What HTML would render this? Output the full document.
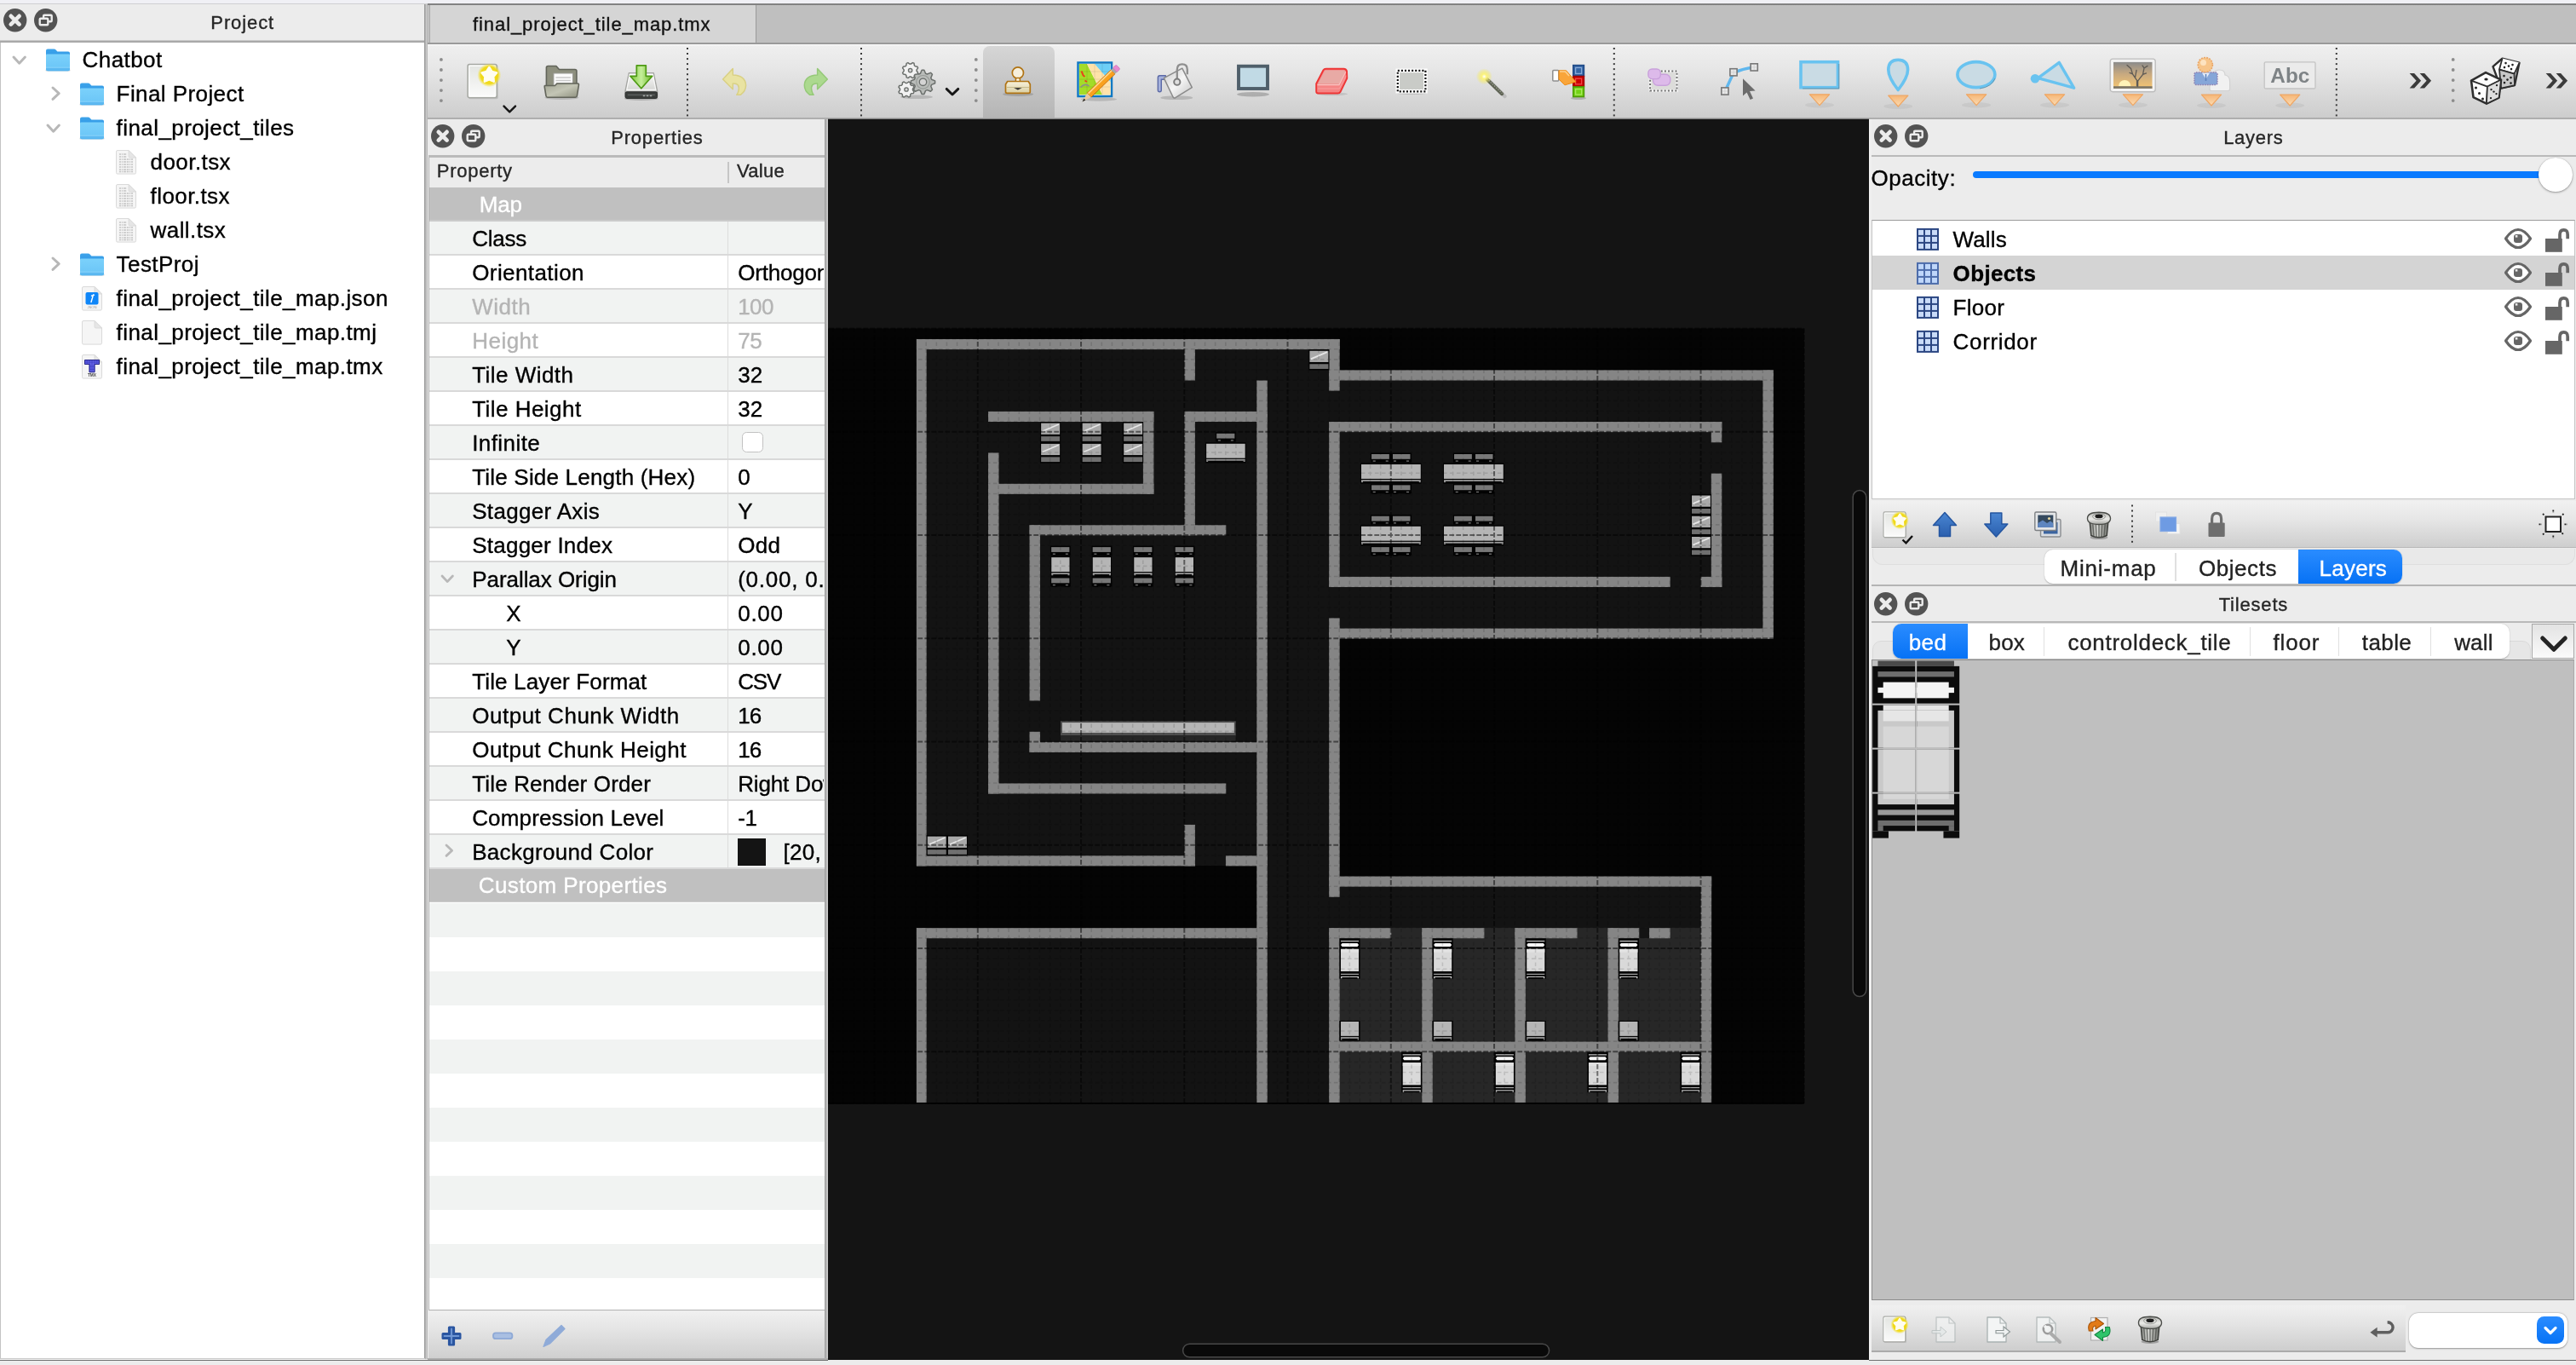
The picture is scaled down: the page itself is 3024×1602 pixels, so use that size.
<!DOCTYPE html>
<html lang="en"><head><meta charset="utf-8"><title>Tiled</title>
<style>
html,body{margin:0;padding:0;}
body{-webkit-font-smoothing:antialiased;width:3024px;height:1602px;overflow:hidden;background:#ececec;position:relative;font-family:"Liberation Sans",sans-serif;}
#root{position:absolute;left:0;top:0;width:3024px;height:1602px;will-change:transform;}
.abs{position:absolute;}
.t{white-space:nowrap;-webkit-text-stroke:0.35px currentColor;}
svg{display:block;overflow:visible;}
</style></head>
<body>
<div id="root">
<!-- left -->
<div class="abs" style="left:0.0px;top:0.0px;width:3024.0px;height:4.0px;background:#f0f0f5;"></div>
<div class="abs" style="left:0.0px;top:3.8px;width:502.0px;height:1.2px;background:#cfcfd2;"></div>
<div class="abs" style="left:0.0px;top:5.0px;width:499.0px;height:42.0px;background:#ececec;"></div>
<svg class="abs" style="left:4.1px;top:10.3px" width="27.4" height="27.4" viewBox="-13.7 -13.7 27.4 27.4"><circle r="13.7" fill="#535353"/><path d="M-4.9 -4.9L4.9 4.9M4.9 -4.9L-4.9 4.9" stroke="#ececec" stroke-width="4.7" stroke-linecap="round"/></svg>
<svg class="abs" style="left:40.3px;top:10.3px" width="27.4" height="27.4" viewBox="-13.7 -13.7 27.4 27.4"><circle r="13.7" fill="#535353"/><rect x="-2.6" y="-6" width="9.6" height="7.6" rx="1" fill="none" stroke="#ececec" stroke-width="2.4"/><rect x="-7" y="-2" width="9.6" height="7.6" rx="1" fill="#535353" stroke="#ececec" stroke-width="2.4"/></svg>
<div class="abs t" style="left:-315.3px;width:1200px;text-align:center;top:15.8px;font-size:22px;line-height:22px;color:#262626;letter-spacing:0.9px;">Project</div>
<div class="abs" style="left:0.0px;top:46.5px;width:499.0px;height:1.5px;background:#c9c9c9;"></div>
<div class="abs" style="left:0.0px;top:48.0px;width:499.0px;height:1.5px;background:#a9a9a9;"></div>
<div class="abs" style="left:0.0px;top:49.5px;width:498.2px;height:1545.0px;background:#ffffff;border-left:1.5px solid #c3c3c3;box-sizing:border-box;"></div>
<svg class="abs" style="left:14.3px;top:65.2px" width="17.4" height="11.2" viewBox="-8.7 -5.6 17.4 11.2"><path d="M-6.7 -3.6L0 3.6L6.7 -3.6" fill="none" stroke="#b8b8b8" stroke-width="3.0" stroke-linecap="round" stroke-linejoin="round"/></svg>
<svg class="abs" style="left:52.6px;top:55.5px" width="30" height="30" viewBox="0 0 30 30"><defs><linearGradient id="fg" x1="0" y1="0" x2="0" y2="1"><stop offset="0" stop-color="#7bd1fb"/><stop offset="1" stop-color="#69c4f6"/></linearGradient><linearGradient id="fgt" x1="0" y1="0" x2="0" y2="1"><stop offset="0" stop-color="#3ea3ea"/><stop offset="1" stop-color="#1c8be0"/></linearGradient></defs><path d="M1.4 26.6H28.6" stroke="#000" stroke-opacity=".12" stroke-width="2.2" stroke-linecap="round"/><path d="M1 3.5Q1 1.5 3 1.5H10.3Q11.8 1.5 12.8 2.7L14.4 4.5H27Q29 4.5 29 6.5V24Q29 26 27 26H3Q1 26 1 24Z" fill="url(#fgt)"/><path d="M1 8.7Q1 7.4 2.4 7.4H27.6Q29 7.4 29 8.7V25.3Q29 27.3 27 27.3H3Q1 27.3 1 25.3Z" fill="url(#fg)"/><path d="M1 23.4H29V25.3Q29 27.3 27 27.3H3Q1 27.3 1 25.3Z" fill="#56b5f0"/><path d="M1 23.2H29" stroke="#8fd6fb" stroke-width=".9"/><path d="M1 25H29" stroke="#6cc2f4" stroke-width=".7"/></svg>
<div class="abs t" style="left:96.6px;top:57.1px;font-size:26px;line-height:26px;color:#000;letter-spacing:0.42px;">Chatbot</div>
<svg class="abs" style="left:59.5px;top:100.6px" width="11.2" height="17.4" viewBox="-5.6 -8.7 11.2 17.4"><path d="M-3.6 -6.7L3.6 0L-3.6 6.7" fill="none" stroke="#b8b8b8" stroke-width="3.0" stroke-linecap="round" stroke-linejoin="round"/></svg>
<svg class="abs" style="left:92.6px;top:95.5px" width="30" height="30" viewBox="0 0 30 30"><defs><linearGradient id="fg" x1="0" y1="0" x2="0" y2="1"><stop offset="0" stop-color="#7bd1fb"/><stop offset="1" stop-color="#69c4f6"/></linearGradient><linearGradient id="fgt" x1="0" y1="0" x2="0" y2="1"><stop offset="0" stop-color="#3ea3ea"/><stop offset="1" stop-color="#1c8be0"/></linearGradient></defs><path d="M1.4 26.6H28.6" stroke="#000" stroke-opacity=".12" stroke-width="2.2" stroke-linecap="round"/><path d="M1 3.5Q1 1.5 3 1.5H10.3Q11.8 1.5 12.8 2.7L14.4 4.5H27Q29 4.5 29 6.5V24Q29 26 27 26H3Q1 26 1 24Z" fill="url(#fgt)"/><path d="M1 8.7Q1 7.4 2.4 7.4H27.6Q29 7.4 29 8.7V25.3Q29 27.3 27 27.3H3Q1 27.3 1 25.3Z" fill="url(#fg)"/><path d="M1 23.4H29V25.3Q29 27.3 27 27.3H3Q1 27.3 1 25.3Z" fill="#56b5f0"/><path d="M1 23.2H29" stroke="#8fd6fb" stroke-width=".9"/><path d="M1 25H29" stroke="#6cc2f4" stroke-width=".7"/></svg>
<div class="abs t" style="left:136.6px;top:97.1px;font-size:26px;line-height:26px;color:#000;letter-spacing:0.42px;">Final Project</div>
<svg class="abs" style="left:54.3px;top:145.2px" width="17.4" height="11.2" viewBox="-8.7 -5.6 17.4 11.2"><path d="M-6.7 -3.6L0 3.6L6.7 -3.6" fill="none" stroke="#b8b8b8" stroke-width="3.0" stroke-linecap="round" stroke-linejoin="round"/></svg>
<svg class="abs" style="left:92.6px;top:135.5px" width="30" height="30" viewBox="0 0 30 30"><defs><linearGradient id="fg" x1="0" y1="0" x2="0" y2="1"><stop offset="0" stop-color="#7bd1fb"/><stop offset="1" stop-color="#69c4f6"/></linearGradient><linearGradient id="fgt" x1="0" y1="0" x2="0" y2="1"><stop offset="0" stop-color="#3ea3ea"/><stop offset="1" stop-color="#1c8be0"/></linearGradient></defs><path d="M1.4 26.6H28.6" stroke="#000" stroke-opacity=".12" stroke-width="2.2" stroke-linecap="round"/><path d="M1 3.5Q1 1.5 3 1.5H10.3Q11.8 1.5 12.8 2.7L14.4 4.5H27Q29 4.5 29 6.5V24Q29 26 27 26H3Q1 26 1 24Z" fill="url(#fgt)"/><path d="M1 8.7Q1 7.4 2.4 7.4H27.6Q29 7.4 29 8.7V25.3Q29 27.3 27 27.3H3Q1 27.3 1 25.3Z" fill="url(#fg)"/><path d="M1 23.4H29V25.3Q29 27.3 27 27.3H3Q1 27.3 1 25.3Z" fill="#56b5f0"/><path d="M1 23.2H29" stroke="#8fd6fb" stroke-width=".9"/><path d="M1 25H29" stroke="#6cc2f4" stroke-width=".7"/></svg>
<div class="abs t" style="left:136.6px;top:137.1px;font-size:26px;line-height:26px;color:#000;letter-spacing:0.42px;">final_project_tiles</div>
<svg class="abs" style="left:135.1px;top:175.0px" width="26" height="31" viewBox="0 0 26 31"><path d="M1.5 3Q1.5 1.5 3 1.5H16L24.5 10V27.6Q24.5 29.1 23 29.1H3Q1.5 29.1 1.5 27.6Z" fill="#f5f5f5" stroke="#dadada" stroke-width="1"/><path d="M16 1.5V8.5Q16 10 17.5 10H24.5Z" fill="#e6e6e6" stroke="#d6d6d6" stroke-width=".8"/><path d="M5 6H14" stroke="#c4c4c4" stroke-width="1.4" stroke-dasharray="2.2 0.8 1.2 0.8 3 0.8"/><path d="M5 9H14" stroke="#c4c4c4" stroke-width="1.4" stroke-dasharray="2.2 0.8 1.2 0.8 3 0.8"/><path d="M5 12H21" stroke="#c4c4c4" stroke-width="1.4" stroke-dasharray="2.2 0.8 1.2 0.8 3 0.8"/><path d="M5 15H21" stroke="#c4c4c4" stroke-width="1.4" stroke-dasharray="2.2 0.8 1.2 0.8 3 0.8"/><path d="M5 18H21" stroke="#c4c4c4" stroke-width="1.4" stroke-dasharray="2.2 0.8 1.2 0.8 3 0.8"/><path d="M5 21H21" stroke="#c4c4c4" stroke-width="1.4" stroke-dasharray="2.2 0.8 1.2 0.8 3 0.8"/><path d="M5 24H21" stroke="#c4c4c4" stroke-width="1.4" stroke-dasharray="2.2 0.8 1.2 0.8 3 0.8"/><path d="M5 26.5H21" stroke="#c4c4c4" stroke-width="1.4" stroke-dasharray="2.2 0.8 1.2 0.8 3 0.8"/></svg>
<div class="abs t" style="left:176.6px;top:177.1px;font-size:26px;line-height:26px;color:#000;letter-spacing:0.42px;">door.tsx</div>
<svg class="abs" style="left:135.1px;top:215.0px" width="26" height="31" viewBox="0 0 26 31"><path d="M1.5 3Q1.5 1.5 3 1.5H16L24.5 10V27.6Q24.5 29.1 23 29.1H3Q1.5 29.1 1.5 27.6Z" fill="#f5f5f5" stroke="#dadada" stroke-width="1"/><path d="M16 1.5V8.5Q16 10 17.5 10H24.5Z" fill="#e6e6e6" stroke="#d6d6d6" stroke-width=".8"/><path d="M5 6H14" stroke="#c4c4c4" stroke-width="1.4" stroke-dasharray="2.2 0.8 1.2 0.8 3 0.8"/><path d="M5 9H14" stroke="#c4c4c4" stroke-width="1.4" stroke-dasharray="2.2 0.8 1.2 0.8 3 0.8"/><path d="M5 12H21" stroke="#c4c4c4" stroke-width="1.4" stroke-dasharray="2.2 0.8 1.2 0.8 3 0.8"/><path d="M5 15H21" stroke="#c4c4c4" stroke-width="1.4" stroke-dasharray="2.2 0.8 1.2 0.8 3 0.8"/><path d="M5 18H21" stroke="#c4c4c4" stroke-width="1.4" stroke-dasharray="2.2 0.8 1.2 0.8 3 0.8"/><path d="M5 21H21" stroke="#c4c4c4" stroke-width="1.4" stroke-dasharray="2.2 0.8 1.2 0.8 3 0.8"/><path d="M5 24H21" stroke="#c4c4c4" stroke-width="1.4" stroke-dasharray="2.2 0.8 1.2 0.8 3 0.8"/><path d="M5 26.5H21" stroke="#c4c4c4" stroke-width="1.4" stroke-dasharray="2.2 0.8 1.2 0.8 3 0.8"/></svg>
<div class="abs t" style="left:176.6px;top:217.1px;font-size:26px;line-height:26px;color:#000;letter-spacing:0.42px;">floor.tsx</div>
<svg class="abs" style="left:135.1px;top:255.0px" width="26" height="31" viewBox="0 0 26 31"><path d="M1.5 3Q1.5 1.5 3 1.5H16L24.5 10V27.6Q24.5 29.1 23 29.1H3Q1.5 29.1 1.5 27.6Z" fill="#f5f5f5" stroke="#dadada" stroke-width="1"/><path d="M16 1.5V8.5Q16 10 17.5 10H24.5Z" fill="#e6e6e6" stroke="#d6d6d6" stroke-width=".8"/><path d="M5 6H14" stroke="#c4c4c4" stroke-width="1.4" stroke-dasharray="2.2 0.8 1.2 0.8 3 0.8"/><path d="M5 9H14" stroke="#c4c4c4" stroke-width="1.4" stroke-dasharray="2.2 0.8 1.2 0.8 3 0.8"/><path d="M5 12H21" stroke="#c4c4c4" stroke-width="1.4" stroke-dasharray="2.2 0.8 1.2 0.8 3 0.8"/><path d="M5 15H21" stroke="#c4c4c4" stroke-width="1.4" stroke-dasharray="2.2 0.8 1.2 0.8 3 0.8"/><path d="M5 18H21" stroke="#c4c4c4" stroke-width="1.4" stroke-dasharray="2.2 0.8 1.2 0.8 3 0.8"/><path d="M5 21H21" stroke="#c4c4c4" stroke-width="1.4" stroke-dasharray="2.2 0.8 1.2 0.8 3 0.8"/><path d="M5 24H21" stroke="#c4c4c4" stroke-width="1.4" stroke-dasharray="2.2 0.8 1.2 0.8 3 0.8"/><path d="M5 26.5H21" stroke="#c4c4c4" stroke-width="1.4" stroke-dasharray="2.2 0.8 1.2 0.8 3 0.8"/></svg>
<div class="abs t" style="left:176.6px;top:257.1px;font-size:26px;line-height:26px;color:#000;letter-spacing:0.42px;">wall.tsx</div>
<svg class="abs" style="left:59.5px;top:300.6px" width="11.2" height="17.4" viewBox="-5.6 -8.7 11.2 17.4"><path d="M-3.6 -6.7L3.6 0L-3.6 6.7" fill="none" stroke="#b8b8b8" stroke-width="3.0" stroke-linecap="round" stroke-linejoin="round"/></svg>
<svg class="abs" style="left:92.6px;top:295.5px" width="30" height="30" viewBox="0 0 30 30"><defs><linearGradient id="fg" x1="0" y1="0" x2="0" y2="1"><stop offset="0" stop-color="#7bd1fb"/><stop offset="1" stop-color="#69c4f6"/></linearGradient><linearGradient id="fgt" x1="0" y1="0" x2="0" y2="1"><stop offset="0" stop-color="#3ea3ea"/><stop offset="1" stop-color="#1c8be0"/></linearGradient></defs><path d="M1.4 26.6H28.6" stroke="#000" stroke-opacity=".12" stroke-width="2.2" stroke-linecap="round"/><path d="M1 3.5Q1 1.5 3 1.5H10.3Q11.8 1.5 12.8 2.7L14.4 4.5H27Q29 4.5 29 6.5V24Q29 26 27 26H3Q1 26 1 24Z" fill="url(#fgt)"/><path d="M1 8.7Q1 7.4 2.4 7.4H27.6Q29 7.4 29 8.7V25.3Q29 27.3 27 27.3H3Q1 27.3 1 25.3Z" fill="url(#fg)"/><path d="M1 23.4H29V25.3Q29 27.3 27 27.3H3Q1 27.3 1 25.3Z" fill="#56b5f0"/><path d="M1 23.2H29" stroke="#8fd6fb" stroke-width=".9"/><path d="M1 25H29" stroke="#6cc2f4" stroke-width=".7"/></svg>
<div class="abs t" style="left:136.6px;top:297.1px;font-size:26px;line-height:26px;color:#000;letter-spacing:0.42px;">TestProj</div>
<svg class="abs" style="left:95.1px;top:335.0px" width="26" height="31" viewBox="0 0 26 31"><path d="M1.5 3Q1.5 1.5 3 1.5H16L24.5 10V27.6Q24.5 29.1 23 29.1H3Q1.5 29.1 1.5 27.6Z" fill="#f5f5f5" stroke="#dadada" stroke-width="1"/><path d="M16 1.5V8.5Q16 10 17.5 10H24.5Z" fill="#e6e6e6" stroke="#d6d6d6" stroke-width=".8"/><rect x="5.5" y="8" width="15" height="14.5" rx="2" fill="#0f86f8"/><path d="M14.5 11L12 19.5M12.5 12.2L15.5 11.2" stroke="#fff" stroke-width="1.4" fill="none" stroke-linecap="round"/><text x="13" y="27.2" font-size="4.2" text-anchor="middle" fill="#9a9a9a" font-family="Liberation Sans, sans-serif">JSON</text></svg>
<div class="abs t" style="left:136.6px;top:337.1px;font-size:26px;line-height:26px;color:#000;letter-spacing:0.42px;">final_project_tile_map.json</div>
<svg class="abs" style="left:95.1px;top:375.0px" width="26" height="31" viewBox="0 0 26 31"><path d="M1.5 3Q1.5 1.5 3 1.5H16L24.5 10V27.6Q24.5 29.1 23 29.1H3Q1.5 29.1 1.5 27.6Z" fill="#f5f5f5" stroke="#dadada" stroke-width="1"/><path d="M16 1.5V8.5Q16 10 17.5 10H24.5Z" fill="#e6e6e6" stroke="#d6d6d6" stroke-width=".8"/></svg>
<div class="abs t" style="left:136.6px;top:377.1px;font-size:26px;line-height:26px;color:#000;letter-spacing:0.42px;">final_project_tile_map.tmj</div>
<svg class="abs" style="left:95.1px;top:415.0px" width="26" height="31" viewBox="0 0 26 31"><path d="M1.5 3Q1.5 1.5 3 1.5H16L24.5 10V27.6Q24.5 29.1 23 29.1H3Q1.5 29.1 1.5 27.6Z" fill="#f5f5f5" stroke="#dadada" stroke-width="1"/><path d="M16 1.5V8.5Q16 10 17.5 10H24.5Z" fill="#e6e6e6" stroke="#d6d6d6" stroke-width=".8"/><path d="M4.5 7.5H21.5V12.5H16V21.8H10V12.5H4.5Z" fill="#6262e6" stroke="#15157a" stroke-width=".9"/><path d="M4.5 10H21.5M10 7.5V21.8M16 7.5V21.8M13 7.5V21.8M10 15H16M10 18.4H16M7.2 7.5V12.5M18.8 7.5V12.5" stroke="#3838b8" stroke-width=".6" fill="none"/><text x="13" y="27.4" font-size="4.8" text-anchor="middle" fill="#444" font-family="Liberation Sans, sans-serif" font-weight="bold">TMX</text></svg>
<div class="abs t" style="left:136.6px;top:417.1px;font-size:26px;line-height:26px;color:#000;letter-spacing:0.42px;">final_project_tile_map.tmx</div>
<div class="abs" style="left:498.2px;top:5.0px;width:3.9px;height:1590.0px;background:linear-gradient(90deg,#8f8f8f,#b4b4b4 40%,#d0d0d0 70%,#a8a8a8);"></div>
<!-- topbar -->
<div class="abs" style="left:502.0px;top:3.8px;width:2522.0px;height:47.0px;background:#bfbfbf;"></div>
<div class="abs" style="left:503.5px;top:5.6px;width:384.3px;height:44.8px;background:#d5d5d5;border-right:1.8px solid #9a9a9a;border-left:1px solid #ababab;box-sizing:border-box;"></div>
<div class="abs" style="left:502.0px;top:3.8px;width:2522.0px;height:2.0px;background:linear-gradient(#8a8a8a,#7c7c7c);"></div>
<div class="abs" style="left:502.0px;top:50.1px;width:2522.0px;height:1.8px;background:#9a9a9a;"></div>
<div class="abs t" style="left:555.0px;top:17.8px;font-size:22px;line-height:22px;color:#111;letter-spacing:0.92px;">final_project_tile_map.tmx</div>
<div class="abs" style="left:502.0px;top:51.9px;width:2522.0px;height:86.1px;background:linear-gradient(#fbfbfb,#efefef 2.5%,#e6e6e6 35%,#cdcdcd);"></div>
<div class="abs" style="left:502.0px;top:137.6px;width:2522.0px;height:2.2px;background:#aeaeae;"></div>
<div class="abs" style="left:1154.0px;top:54.0px;width:84.0px;height:83.5px;background:linear-gradient(#d6d6d6,#b5b5b5);border-radius:8px 8px 0 0;"></div>
<svg class="abs" style="left:0;top:0" width="3024" height="140" viewBox="0 0 3024 140"><defs><linearGradient id="otri" x1="0" y1="0" x2="0" y2="1"><stop offset="0" stop-color="#f6b676"/><stop offset="1" stop-color="#fbdcb4"/></linearGradient><linearGradient id="pg" x1="0" y1="0" x2="0" y2="1"><stop offset="0" stop-color="#e3e5e1"/><stop offset="1" stop-color="#fbfbfb"/></linearGradient><radialGradient id="glow"><stop offset="0" stop-color="#f1d90f"/><stop offset=".72" stop-color="#f1d90f" stop-opacity=".95"/><stop offset="1" stop-color="#f5e43a" stop-opacity="0"/></radialGradient><radialGradient id="wglow"><stop offset="0" stop-color="#fff"/><stop offset=".3" stop-color="#fbf27c"/><stop offset="1" stop-color="#f5e84a" stop-opacity="0"/></radialGradient><linearGradient id="trb" x1="0" y1="0" x2="1" y2="0"><stop offset="0" stop-color="#7f817c"/><stop offset=".4" stop-color="#dcddd9"/><stop offset="1" stop-color="#6f716c"/></linearGradient><linearGradient id="trr" x1="0" y1="0" x2="0" y2="1"><stop offset="0" stop-color="#b9bab6"/><stop offset=".55" stop-color="#ecece9"/><stop offset="1" stop-color="#a5a6a2"/></linearGradient><linearGradient id="fold" x1="0" y1="0" x2="1" y2="1"><stop offset="0" stop-color="#a3a594"/><stop offset=".5" stop-color="#c3c5b5"/><stop offset="1" stop-color="#8f917f"/></linearGradient><linearGradient id="drv" x1="0" y1="0" x2="0" y2="1"><stop offset="0" stop-color="#fbfbfb"/><stop offset="1" stop-color="#cfd0cd"/></linearGradient><linearGradient id="garr" x1="0" y1="0" x2="1" y2="0"><stop offset="0" stop-color="#7cc53a"/><stop offset=".5" stop-color="#c5ef9a"/><stop offset="1" stop-color="#6ab524"/></linearGradient><linearGradient id="sky" x1="0" y1="0" x2="0" y2="1"><stop offset="0" stop-color="#8b8b8b"/><stop offset=".45" stop-color="#c7a980"/><stop offset="1" stop-color="#f6c672"/></linearGradient><linearGradient id="bkt" x1="0" y1="0" x2="1" y2="1"><stop offset="0" stop-color="#c9c9c9"/><stop offset=".5" stop-color="#f6f6f6"/><stop offset="1" stop-color="#c2c2c2"/></linearGradient><linearGradient id="stp" x1="0" y1="0" x2="0" y2="1"><stop offset="0" stop-color="#f7f1da"/><stop offset="1" stop-color="#d9cfa4"/></linearGradient></defs><circle cx="517.9" cy="69.9" r="1.9" fill="#8c8c8c"/><circle cx="517.9" cy="82" r="1.9" fill="#8c8c8c"/><circle cx="517.9" cy="94.1" r="1.9" fill="#8c8c8c"/><circle cx="517.9" cy="106.1" r="1.9" fill="#8c8c8c"/><circle cx="517.9" cy="118.1" r="1.9" fill="#8c8c8c"/><g transform="translate(548.3 74.8) scale(1.0)"><rect x="1.5" y="1.5" width="35" height="40" rx="2" fill="#000" opacity=".12"/><rect x=".8" y=".8" width="34" height="39" rx="2" fill="url(#pg)" stroke="#a6a8a3" stroke-width="1.5"/><rect x="2.4" y="2.4" width="30.8" height="35.8" rx="1" fill="none" stroke="#fff" stroke-width="1.4" opacity=".85"/><circle cx="26" cy="13.4" r="14" fill="url(#glow)"/><path d="M26.0 4.2L29.1 9.2L34.7 10.6L30.9 15.0L31.4 20.8L26.0 18.6L20.6 20.8L21.1 15.0L17.3 10.6L22.9 9.2Z" fill="#fffdf0" stroke="#fffdf0" stroke-width="2.6" stroke-linejoin="round"/></g><path d="M591.5 124.6L598.2 131.4L605 124.6" fill="none" stroke="#151515" stroke-width="2.4" stroke-linecap="round" stroke-linejoin="round"/><g transform="translate(638.4 76)"><ellipse cx="21" cy="38.5" rx="20" ry="2.5" fill="#000" opacity=".15"/><path d="M3 3.5Q3 1.5 5 1.5H14.5L18 5.5H36.5Q38.5 5.5 38.5 7.5V34H3Z" fill="#8d8f7e" stroke="#62645a" stroke-width="1.6" stroke-linejoin="round"/><rect x="11.5" y="10" width="22.5" height="20" fill="#fbfbfb" stroke="#9b9b96" stroke-width="1"/><path d="M14 15H31.5M14 18.5H31.5M14 22H31.5" stroke="#c9c9c9" stroke-width="1.5"/><path d="M1.2 24.5H13L15.5 22H39.8Q41.3 22 41 23.8L39 36.5Q38.7 38.2 37 38.2H4.5Q2.8 38.2 2.6 36.5L.9 26.3Q.7 24.5 1.2 24.5Z" fill="url(#fold)" stroke="#62645a" stroke-width="1.6" stroke-linejoin="round"/></g><g transform="translate(732.8 75.8)"><ellipse cx="20" cy="40" rx="20" ry="2.2" fill="#000" opacity=".18"/><path d="M5.5 10H34.5L38.8 31V33H1.2V31Z" fill="url(#drv)" stroke="#a4a5a2" stroke-width="1.4" stroke-linejoin="round"/><path d="M6.5 11.5H33.5L37 29.5H3Z" fill="none" stroke="#fff" stroke-width="1.2" opacity=".8"/><rect x="1.2" y="32" width="37.6" height="7.6" rx="1.8" fill="#3b3e3c" stroke="#2a2c2b" stroke-width="1"/><path d="M4 35.6H36" stroke="#5e6260" stroke-width="1.2"/><path d="M22 36.6H34" stroke="#9da19f" stroke-width="1.6" stroke-dasharray="2.5 1.5"/><path d="M14.5 1H25.5V13.5H33L20 28L7 13.5H14.5Z" fill="url(#garr)" stroke="#4e9a14" stroke-width="1.7" stroke-linejoin="round"/></g><rect x="806" y="56.0" width="2" height="2" fill="#3a3a3a"/><rect x="806" y="62.0" width="2" height="2" fill="#3a3a3a"/><rect x="806" y="68.1" width="2" height="2" fill="#3a3a3a"/><rect x="806" y="74.1" width="2" height="2" fill="#3a3a3a"/><rect x="806" y="80.1" width="2" height="2" fill="#3a3a3a"/><rect x="806" y="86.2" width="2" height="2" fill="#3a3a3a"/><rect x="806" y="92.2" width="2" height="2" fill="#3a3a3a"/><rect x="806" y="98.2" width="2" height="2" fill="#3a3a3a"/><rect x="806" y="104.2" width="2" height="2" fill="#3a3a3a"/><rect x="806" y="110.3" width="2" height="2" fill="#3a3a3a"/><rect x="806" y="116.3" width="2" height="2" fill="#3a3a3a"/><rect x="806" y="122.3" width="2" height="2" fill="#3a3a3a"/><rect x="806" y="128.4" width="2" height="2" fill="#3a3a3a"/><rect x="806" y="134.4" width="2" height="2" fill="#3a3a3a"/><g transform="translate(847.8 79.8)"><path d="M12.5 0.8L0.8 13.2L12.5 25V18.2Q21 17.5 19.2 26.5Q18.4 30 17 31.5H21.5Q27.8 27 27.8 20.2Q27.2 8.8 12.5 8.2Z" fill="#e9e3a2" stroke="#d9d084" stroke-width="1.5" stroke-linejoin="round"/></g><g transform="translate(972.1 79.8) scale(-1 1)"><path d="M12.5 0.8L0.8 13.2L12.5 25V18.2Q21 17.5 19.2 26.5Q18.4 30 17 31.5H21.5Q27.8 27 27.8 20.2Q27.2 8.8 12.5 8.2Z" fill="#acd98f" stroke="#95c978" stroke-width="1.5" stroke-linejoin="round"/></g><rect x="1010" y="56.0" width="2" height="2" fill="#3a3a3a"/><rect x="1010" y="62.0" width="2" height="2" fill="#3a3a3a"/><rect x="1010" y="68.1" width="2" height="2" fill="#3a3a3a"/><rect x="1010" y="74.1" width="2" height="2" fill="#3a3a3a"/><rect x="1010" y="80.1" width="2" height="2" fill="#3a3a3a"/><rect x="1010" y="86.2" width="2" height="2" fill="#3a3a3a"/><rect x="1010" y="92.2" width="2" height="2" fill="#3a3a3a"/><rect x="1010" y="98.2" width="2" height="2" fill="#3a3a3a"/><rect x="1010" y="104.2" width="2" height="2" fill="#3a3a3a"/><rect x="1010" y="110.3" width="2" height="2" fill="#3a3a3a"/><rect x="1010" y="116.3" width="2" height="2" fill="#3a3a3a"/><rect x="1010" y="122.3" width="2" height="2" fill="#3a3a3a"/><rect x="1010" y="128.4" width="2" height="2" fill="#3a3a3a"/><rect x="1010" y="134.4" width="2" height="2" fill="#3a3a3a"/><ellipse cx="1076" cy="113.8" rx="19" ry="2.3" fill="#000" opacity=".15"/><path d="M1097.63 94.91 L1097.63 97.69 L1093.56 99.35 L1092.77 101.25 L1094.48 105.31 L1092.51 107.28 L1088.45 105.57 L1086.55 106.36 L1084.89 110.43 L1082.11 110.43 L1080.45 106.36 L1078.55 105.57 L1074.49 107.28 L1072.52 105.31 L1074.23 101.25 L1073.44 99.35 L1069.37 97.69 L1069.37 94.91 L1073.44 93.25 L1074.23 91.35 L1072.52 87.29 L1074.49 85.32 L1078.55 87.03 L1080.45 86.24 L1082.11 82.17 L1084.89 82.17 L1086.55 86.24 L1088.45 87.03 L1092.51 85.32 L1094.48 87.29 L1092.77 91.35 L1093.56 93.25Z" fill="#b9bcb9" stroke="#6b6f6c" stroke-width="1.5" stroke-linejoin="round"/><circle cx="1083.5" cy="96.3" r="4.2" fill="#d4d4d4" stroke="#6b6f6c" stroke-width="1.3"/><circle cx="1083.5" cy="96.3" r="7.8" fill="none" stroke="#989c99" stroke-width="1.2"/><path d="M1077.60 85.30 L1076.90 87.01 L1074.43 87.35 L1073.39 88.40 L1073.05 90.88 L1071.35 91.59 L1069.36 90.08 L1067.88 90.09 L1065.90 91.60 L1064.19 90.90 L1063.85 88.43 L1062.80 87.39 L1060.32 87.05 L1059.61 85.35 L1061.12 83.36 L1061.11 81.88 L1059.60 79.90 L1060.30 78.19 L1062.77 77.85 L1063.81 76.80 L1064.15 74.32 L1065.85 73.61 L1067.84 75.12 L1069.32 75.11 L1071.30 73.60 L1073.01 74.30 L1073.35 76.77 L1074.40 77.81 L1076.88 78.15 L1077.59 79.85 L1076.08 81.84 L1076.09 83.32Z" fill="#f2f2f2" stroke="#6b6f6c" stroke-width="1.5" stroke-linejoin="round"/><circle cx="1068.6" cy="82.6" r="2.2" fill="#d4d4d4" stroke="#6b6f6c" stroke-width="1.3"/><path d="M1073.00 107.70 L1072.30 109.41 L1069.83 109.75 L1068.79 110.80 L1068.45 113.28 L1066.75 113.99 L1064.76 112.48 L1063.28 112.49 L1061.30 114.00 L1059.59 113.30 L1059.25 110.83 L1058.20 109.79 L1055.72 109.45 L1055.01 107.75 L1056.52 105.76 L1056.51 104.28 L1055.00 102.30 L1055.70 100.59 L1058.17 100.25 L1059.21 99.20 L1059.55 96.72 L1061.25 96.01 L1063.24 97.52 L1064.72 97.51 L1066.70 96.00 L1068.41 96.70 L1068.75 99.17 L1069.80 100.21 L1072.28 100.55 L1072.99 102.25 L1071.48 104.24 L1071.49 105.72Z" fill="#f2f2f2" stroke="#6b6f6c" stroke-width="1.5" stroke-linejoin="round"/><circle cx="1064" cy="105" r="2.2" fill="#d4d4d4" stroke="#6b6f6c" stroke-width="1.3"/><path d="M1111.2 104.4L1118 111L1124.8 104.4" fill="none" stroke="#151515" stroke-width="2.9" stroke-linecap="round" stroke-linejoin="round"/><circle cx="1145.8" cy="69.9" r="1.9" fill="#8c8c8c"/><circle cx="1145.8" cy="82" r="1.9" fill="#8c8c8c"/><circle cx="1145.8" cy="94.1" r="1.9" fill="#8c8c8c"/><circle cx="1145.8" cy="106.1" r="1.9" fill="#8c8c8c"/><circle cx="1145.8" cy="118.1" r="1.9" fill="#8c8c8c"/><g transform="translate(1179.7 78)"><ellipse cx="15.5" cy="32.5" rx="18" ry="2.6" fill="#000" opacity=".15"/><circle cx="15.2" cy="7.5" r="6.6" fill="#f6efdc" stroke="#b07313" stroke-width="1.7"/><rect x="12.7" y="13.5" width="5" height="6" rx="1.5" fill="#fbf6e6" stroke="#b07313" stroke-width="1.5"/><path d="M3 17.5H27.5L29.6 21V29.5Q29.6 31.3 27.8 31.3H2.6Q.8 31.3 .8 29.5V21Z" fill="url(#stp)" stroke="#b07313" stroke-width="1.7" stroke-linejoin="round"/><path d="M2 24.5H28.5" stroke="#c8bc8e" stroke-width="1"/><path d="M10.5 25.2H20L15.2 27.6Z" fill="#222"/></g><g transform="translate(1264 72)"><ellipse cx="26" cy="44.5" rx="21" ry="2.2" fill="#000" opacity=".14"/><rect x="1.5" y="1.5" width="39.5" height="39.5" fill="#fff7df" stroke="#1179c4" stroke-width="2.5"/><path d="M3 3H12L30 39H3Z" fill="#a4dc28"/><path d="M12 3H21L39.5 24V39H30Z" fill="#ffe2aa"/><path d="M21 3H39.5V24Z" fill="#6dcff6"/><path d="M3 12H39.5M3 21H39.5M3 30H39.5M12 3V39M21 3V39M30 3V39" stroke="#000" stroke-opacity=".09" stroke-width="1"/><path d="M5.5 11.5l2 4.5M7 16l2.5 2M9.5 22.5l2.5 1.5" stroke="#e8441a" stroke-width="2" fill="none"/><path d="M4.5 30.5Q9 25 14.5 29" stroke="#8c8c8c" stroke-width="1.6" fill="none"/></g><g><path d="M1276.1 109.3L1304.2 81.9L1309 86.7L1280.9 114.1Z" fill="#f9a11e" stroke="#c76b00" stroke-width=".9"/><path d="M1277.6 109.6L1305.2 82.7" stroke="#ffd58a" stroke-width="1.8"/><path d="M1304.2 81.9L1306.5 79.7L1311.3 84.5L1309 86.7Z" fill="#a9a9a9"/><path d="M1306.5 79.7L1309.2 77Q1310.2 76.2 1311.2 77L1314 79.8Q1314.9 80.8 1314 81.8L1311.3 84.5Z" fill="#e88ad0" stroke="#c96bb4" stroke-width=".7"/><path d="M1270.6 119.4L1276.1 109.3L1280.9 114.1Z" fill="#e9c9a0"/><path d="M1270.4 119.6L1272.6 115.7L1274.4 117.5Z" fill="#222"/></g><g transform="translate(1358.3 74.2)"><ellipse cx="23" cy="40.5" rx="19" ry="2.4" fill="#000" opacity=".15"/><path d="M10 14.5H3.2Q1 14.5 1 16.8V31.5Q1 33.5 3 33.5T5 31.5V19H10Z" fill="#a5b1dc" stroke="#5c6aa6" stroke-width="1.4" stroke-linejoin="round"/><path d="M8 17.5L29.5 6L41 28.5L21.5 40.5Q19.8 41.3 18.8 39.8Z" fill="url(#bkt)" stroke="#8a8a8a" stroke-width="1.5" stroke-linejoin="round"/><path d="M23.5 21V7.5Q23.5 1.2 29.5 1.2T35.5 7.5V13" fill="none" stroke="#8e8e8e" stroke-width="2.3"/><circle cx="23.5" cy="22" r="3.6" fill="#e0e0e0" stroke="#7c7c7c" stroke-width="2"/></g><ellipse cx="1471" cy="110.8" rx="19" ry="2.8" fill="#000" opacity=".2"/><rect x="1454" y="77.7" width="34" height="26.3" fill="#c1dae5" stroke="#4f5f6a" stroke-width="3.9"/><g transform="translate(1544 79.8)"><ellipse cx="20" cy="30.5" rx="18" ry="2" fill="#000" opacity=".1"/><path d="M1.2 18.5L9.5 2.5Q10.5 1 12.5 1H33.5Q36 1 37 3.5L37.3 12L29.5 28Q28.5 29.7 26.5 29.7H3.5Q1.2 29.7 1.2 27.4Z" fill="#f58585" stroke="#ee3535" stroke-width="1.9" stroke-linejoin="round"/><path d="M3 18.8L10.8 3.6Q11.4 2.8 12.6 2.8H33.4Q34.8 2.8 35.3 4.2L28 18.8Z" fill="#e8aaa5"/><path d="M2.5 19.8H28L35.8 4.5" fill="none" stroke="#f9c2c0" stroke-width="1.2"/><path d="M3 24.2H28.3L36.2 9" fill="none" stroke="#f9a0a0" stroke-width="1"/></g><ellipse cx="1657" cy="109.3" rx="18" ry="1.8" fill="#000" opacity=".12"/><rect x="1640.8" y="82.8" width="32.6" height="24.5" fill="#c9cbc7" stroke="#fff" stroke-width="4.6"/><rect x="1640.8" y="82.8" width="32.6" height="24.5" fill="none" stroke="#111" stroke-width="2.2" stroke-dasharray="2.05 2.03"/><path d="M1749 95.5L1766.5 113" stroke="#000" stroke-opacity=".12" stroke-width="4.5" stroke-linecap="round"/><path d="M1745.5 93L1763.2 110.2" stroke="#5e6354" stroke-width="4" stroke-linecap="round"/><path d="M1745.5 92.2L1763.4 109.6" stroke="#9ea294" stroke-width="1.3" stroke-dasharray="1.5 1.5"/><circle cx="1742.3" cy="89.8" r="9.5" fill="url(#wglow)"/><g><ellipse cx="1853" cy="115.3" rx="9" ry="1.8" fill="#000" opacity=".18"/><rect x="1822.8" y="82.6" width="7" height="12.4" rx="1" fill="#fff" stroke="#8e8e8e" stroke-width="1.5"/><rect x="1846.8" y="76.6" width="12.6" height="12.6" fill="#3465a4" stroke="#204a87" stroke-width="1.6"/><rect x="1849.6" y="79.4" width="7" height="7" fill="none" stroke="#87a9d8" stroke-width="1.3"/><rect x="1846.8" y="89.6" width="12.6" height="12" fill="#cc0000" stroke="#a40000" stroke-width="1.6"/><rect x="1849.6" y="92.2" width="7" height="6.6" fill="none" stroke="#ef4949" stroke-width="1.3"/><rect x="1846.8" y="101.9" width="12.6" height="11.6" fill="#73d216" stroke="#4e9a06" stroke-width="1.6"/><rect x="1849.6" y="104.6" width="7" height="6.4" fill="none" stroke="#a9ea5e" stroke-width="1.3"/><path d="M1830 82.8H1838.5L1850 96L1837 99.8L1830 93Z" fill="#f9a53a" stroke="#f08a10" stroke-width="1" stroke-linejoin="round"/><path d="M1831 84H1837.5L1842 89" stroke="#fdd08e" stroke-width="1.6" fill="none"/></g><rect x="1893.8" y="56.0" width="2" height="2" fill="#3a3a3a"/><rect x="1893.8" y="62.0" width="2" height="2" fill="#3a3a3a"/><rect x="1893.8" y="68.1" width="2" height="2" fill="#3a3a3a"/><rect x="1893.8" y="74.1" width="2" height="2" fill="#3a3a3a"/><rect x="1893.8" y="80.1" width="2" height="2" fill="#3a3a3a"/><rect x="1893.8" y="86.2" width="2" height="2" fill="#3a3a3a"/><rect x="1893.8" y="92.2" width="2" height="2" fill="#3a3a3a"/><rect x="1893.8" y="98.2" width="2" height="2" fill="#3a3a3a"/><rect x="1893.8" y="104.2" width="2" height="2" fill="#3a3a3a"/><rect x="1893.8" y="110.3" width="2" height="2" fill="#3a3a3a"/><rect x="1893.8" y="116.3" width="2" height="2" fill="#3a3a3a"/><rect x="1893.8" y="122.3" width="2" height="2" fill="#3a3a3a"/><rect x="1893.8" y="128.4" width="2" height="2" fill="#3a3a3a"/><rect x="1893.8" y="134.4" width="2" height="2" fill="#3a3a3a"/><g><rect x="1937.1" y="83.6" width="31.4" height="23" fill="#dcdcda" stroke="#f4f4f4" stroke-width="3"/><rect x="1937.1" y="83.6" width="31.4" height="23" fill="none" stroke="#6e6e6e" stroke-width="2" stroke-dasharray="2 2.2"/><rect x="1940.6" y="87.3" width="20.2" height="13" rx="5.5" fill="#ddbaea" stroke="#c9a1db" stroke-width="1.4"/><rect x="1934.9" y="81" width="14.4" height="11.6" rx="4.5" fill="#ddbaea" stroke="#c9a1db" stroke-width="1.4"/></g><path d="M2025.5 106L2035 85.5Q2046 80.5 2059 79" fill="none" stroke="#5fb7ee" stroke-width="3.4"/><rect x="2020.8000000000002" y="102.9" width="8.2" height="8.2" fill="#e9e9e9" stroke="#777" stroke-width="1.6"/><path d="M2024.9 104V110M2021.9 107H2027.9" stroke="#cfcfcf" stroke-width=".8"/><rect x="2030.9" y="80.7" width="8.2" height="8.2" fill="#e9e9e9" stroke="#777" stroke-width="1.6"/><path d="M2035 81.8V87.8M2032 84.8H2038" stroke="#cfcfcf" stroke-width=".8"/><rect x="2055.1" y="74.80000000000001" width="8.2" height="8.2" fill="#e9e9e9" stroke="#777" stroke-width="1.6"/><path d="M2059.2 75.9V81.9M2056.2 78.9H2062.2" stroke="#cfcfcf" stroke-width=".8"/><path d="M2046 92.2V112.6L2050.6 108.4L2054.6 117L2058 115.4L2054 107L2060.6 106.6Z" fill="#6c6c6c"/><rect x="2114" y="72.7" width="43.5" height="30" fill="#c9dbe4" stroke="#69c3f0" stroke-width="3.6"/><path d="M2116.2 103.9H2158.8V75" fill="none" stroke="#555" stroke-opacity=".45" stroke-width="1"/><ellipse cx="2136" cy="123.3" rx="17" ry="3.2" fill="#000" opacity=".05"/><path d="M2124.4 110.8H2147.6L2136 123.6Z" fill="url(#otri)" stroke="#efa663" stroke-width="1.2" stroke-linejoin="round"/><path d="M2228.2 105.5Q2216.8 91 2216.8 82Q2216.8 70.2 2228.2 70.2T2239.6 82Q2239.6 91 2228.2 105.5Z" fill="#c9dbe4" stroke="#69c3f0" stroke-width="3.6" stroke-linejoin="round"/><ellipse cx="2228.3" cy="124.7" rx="17" ry="3.2" fill="#000" opacity=".05"/><path d="M2216.7000000000003 112.2H2239.9L2228.3 125.0Z" fill="url(#otri)" stroke="#efa663" stroke-width="1.2" stroke-linejoin="round"/><ellipse cx="2319.9" cy="87.6" rx="22" ry="15" fill="#c9dbe4" stroke="#69c3f0" stroke-width="3.6"/><path d="M2342 92Q2338 102 2324 104" fill="none" stroke="#555" stroke-opacity=".4" stroke-width="1"/><ellipse cx="2320.1" cy="123.3" rx="17" ry="3.2" fill="#000" opacity=".05"/><path d="M2308.5 110.8H2331.7L2320.1 123.6Z" fill="url(#otri)" stroke="#efa663" stroke-width="1.2" stroke-linejoin="round"/><path d="M2392.4 91.6L2417.3 73.4L2434.6 103.2Z" fill="#c9dbe4" stroke="#69c3f0" stroke-width="3.4" stroke-linejoin="round"/><circle cx="2389" cy="92.2" r="5.3" fill="#69c3f0"/><ellipse cx="2412" cy="123.3" rx="17" ry="3.2" fill="#000" opacity=".05"/><path d="M2400.4 110.8H2423.6L2412 123.6Z" fill="url(#otri)" stroke="#efa663" stroke-width="1.2" stroke-linejoin="round"/><g transform="translate(2476.5 68.4)"><rect x=".7" y=".7" width="53" height="38.6" rx="3" fill="#f3f3f3" stroke="#bdbdbd" stroke-width="1.4"/><rect x="4.5" y="4.5" width="45.5" height="31" fill="url(#sky)"/><path d="M10.5 32.8A7.2 7.2 0 0 1 24.9 32.8Z" fill="#fff3b8"/><rect x="4.5" y="32.8" width="45.5" height="2.7" fill="#7d7769"/><path d="M32.8 33V27L27 18.5L25 12L20.5 8M27 18.5L23.5 17M32.8 27L39 19L40.5 11.5L44.5 9M39 19L43 17.5M40.5 11.5L38.5 8.5M30 22.5L31.5 14" fill="none" stroke="#5f5b55" stroke-width="1.3" stroke-linecap="round"/><path d="M32.6 33V26.5" stroke="#5f5b55" stroke-width="2.4"/></g><ellipse cx="2503.9" cy="123.3" rx="17" ry="3.2" fill="#000" opacity=".05"/><path d="M2492.3 110.8H2515.5L2503.9 123.6Z" fill="url(#otri)" stroke="#efa663" stroke-width="1.2" stroke-linejoin="round"/><g><path d="M2598 90Q2598 82 2605 82T2612 88Q2617.6 89 2617.6 96V104.5Q2617.6 106.5 2615.6 106.5H2596Q2594 106.5 2594 104.5V94Q2594 90 2598 90Z" fill="#f1f1f1" stroke="#d2d2d2" stroke-width="1.2"/><rect x="2576" y="85" width="27" height="14.5" rx="2" fill="#86a6d8" stroke="#8f7fb0" stroke-width="1.4" stroke-dasharray="1.6 1.2"/><path d="M2585 85.5L2589.5 93L2594 85.5" fill="#e7eef9"/><path d="M2589.5 87V95" stroke="#5f83bd" stroke-width="1.6"/><circle cx="2588.8" cy="76.1" r="8.6" fill="#f7c58a" stroke="#e9a667" stroke-width="1.6" stroke-dasharray="2 1.2"/><circle cx="2586.5" cy="73.5" r="3.5" fill="#fde3c0"/></g><ellipse cx="2596" cy="123.7" rx="17" ry="3.2" fill="#000" opacity=".05"/><path d="M2584.4 111.2H2607.6L2596 124.0Z" fill="url(#otri)" stroke="#efa663" stroke-width="1.2" stroke-linejoin="round"/><rect x="2658.2" y="72.8" width="59.8" height="31.2" rx="1.5" fill="#ebebeb" stroke="#c3c3c3" stroke-width="1.3"/><text x="2688.3" y="97.2" font-size="24.5" font-weight="bold" text-anchor="middle" fill="#7e8386" font-family="Liberation Sans, sans-serif" textLength="46" lengthAdjust="spacingAndGlyphs">Abc</text><ellipse cx="2688.2" cy="123.7" rx="17" ry="3.2" fill="#000" opacity=".05"/><path d="M2676.6 111.2H2699.7999999999997L2688.2 124.0Z" fill="url(#otri)" stroke="#efa663" stroke-width="1.2" stroke-linejoin="round"/><rect x="2741.8" y="56.0" width="2" height="2" fill="#3a3a3a"/><rect x="2741.8" y="62.0" width="2" height="2" fill="#3a3a3a"/><rect x="2741.8" y="68.1" width="2" height="2" fill="#3a3a3a"/><rect x="2741.8" y="74.1" width="2" height="2" fill="#3a3a3a"/><rect x="2741.8" y="80.1" width="2" height="2" fill="#3a3a3a"/><rect x="2741.8" y="86.2" width="2" height="2" fill="#3a3a3a"/><rect x="2741.8" y="92.2" width="2" height="2" fill="#3a3a3a"/><rect x="2741.8" y="98.2" width="2" height="2" fill="#3a3a3a"/><rect x="2741.8" y="104.2" width="2" height="2" fill="#3a3a3a"/><rect x="2741.8" y="110.3" width="2" height="2" fill="#3a3a3a"/><rect x="2741.8" y="116.3" width="2" height="2" fill="#3a3a3a"/><rect x="2741.8" y="122.3" width="2" height="2" fill="#3a3a3a"/><rect x="2741.8" y="128.4" width="2" height="2" fill="#3a3a3a"/><rect x="2741.8" y="134.4" width="2" height="2" fill="#3a3a3a"/><path d="M2828.6 86H2834.1L2842.1 94.8L2834.1 103.6H2828.6L2836.6 94.8Z" fill="#3b3b3b"/><path d="M2840.6 86H2846.1L2854.1 94.8L2846.1 103.6H2840.6L2848.6 94.8Z" fill="#3b3b3b"/><circle cx="2879.7" cy="69.9" r="1.9" fill="#8c8c8c"/><circle cx="2879.7" cy="82" r="1.9" fill="#8c8c8c"/><circle cx="2879.7" cy="94.1" r="1.9" fill="#8c8c8c"/><circle cx="2879.7" cy="106.1" r="1.9" fill="#8c8c8c"/><circle cx="2879.7" cy="118.1" r="1.9" fill="#8c8c8c"/><path d="M2988.6 86H2994.1L3002.1 94.8L2994.1 103.6H2988.6L2996.6 94.8Z" fill="#3b3b3b"/><path d="M3000.6 86H3006.1L3014.1 94.8L3006.1 103.6H3000.6L3008.6 94.8Z" fill="#3b3b3b"/><g transform="translate(2899.5 67.1)"><path d="M27 11L38 1.5L58 6.5L52.5 33L36.5 36.5Z" fill="#fbfbfb" stroke="#2e2e2e" stroke-width="2.4" stroke-linejoin="round"/><path d="M38 1.5L34.5 14.5L52 19.5L58 6.5" fill="#fff" stroke="#2e2e2e" stroke-width="1.8" stroke-linejoin="round"/><path d="M34.5 14.5L52 19.5L52.5 33L36.5 36.5Z" fill="#c8c8c8" stroke="#2e2e2e" stroke-width="1.8" stroke-linejoin="round"/><g fill="#222"><circle cx="42" cy="7" r="1.3"/><circle cx="50" cy="9" r="1.3"/><circle cx="40.5" cy="12" r="1.3"/><circle cx="48.5" cy="14" r="1.3"/><circle cx="45.5" cy="10.5" r="1.3"/><circle cx="40" cy="22" r="1.3"/><circle cx="48" cy="24" r="1.3"/><circle cx="40.5" cy="30" r="1.3"/><circle cx="48" cy="30.5" r="1.3"/><circle cx="44" cy="26.5" r="1.3"/></g><path d="M1.5 27.5L18.5 18L36.5 26.5L34 47.5L19.5 54.5L4 47Z" fill="#fdfdfd" stroke="#2e2e2e" stroke-width="2.6" stroke-linejoin="round"/><path d="M1.5 27.5L20.5 34.5L36.5 26.5M20.5 34.5L19.5 54.5" fill="none" stroke="#2e2e2e" stroke-width="2" stroke-linejoin="round"/><path d="M20.5 34.5L36.5 26.5L34 47.5L19.5 54.5Z" fill="#dedede" stroke="#2e2e2e" stroke-width="1.6" stroke-linejoin="round"/><g fill="#222"><ellipse cx="19" cy="26" rx="2.2" ry="1.5"/><circle cx="7" cy="36" r="1.5"/><circle cx="15" cy="49" r="1.5"/><circle cx="11" cy="42.5" r="1.5"/><circle cx="25" cy="38" r="1.2"/><circle cx="31.5" cy="33" r="1.2"/><circle cx="24.5" cy="48" r="1.2"/><circle cx="31" cy="43" r="1.2"/><circle cx="28" cy="40.5" r="1.2"/></g></g></svg>
<!-- props -->
<div class="abs" style="left:502.5px;top:139.7px;width:469.0px;height:43.0px;background:#ececec;"></div>
<svg class="abs" style="left:506.3px;top:146.1px" width="27.4" height="27.4" viewBox="-13.7 -13.7 27.4 27.4"><circle r="13.7" fill="#535353"/><path d="M-4.9 -4.9L4.9 4.9M4.9 -4.9L-4.9 4.9" stroke="#ececec" stroke-width="4.7" stroke-linecap="round"/></svg>
<svg class="abs" style="left:542.3px;top:146.1px" width="27.4" height="27.4" viewBox="-13.7 -13.7 27.4 27.4"><circle r="13.7" fill="#535353"/><rect x="-2.6" y="-6" width="9.6" height="7.6" rx="1" fill="none" stroke="#ececec" stroke-width="2.4"/><rect x="-7" y="-2" width="9.6" height="7.6" rx="1" fill="#535353" stroke="#ececec" stroke-width="2.4"/></svg>
<div class="abs t" style="left:171.4px;width:1200px;text-align:center;top:151.2px;font-size:22px;line-height:22px;color:#262626;letter-spacing:0.82px;">Properties</div>
<div class="abs" style="left:502.5px;top:181.7px;width:468.0px;height:2.0px;background:#b9b9b9;"></div>
<div class="abs" style="left:502.5px;top:184.4px;width:467.5px;height:1354.1px;background:#fff;border:1px solid #b4b4b4;border-top-color:#bdbdbd;box-sizing:border-box;"></div>
<div class="abs" style="left:503.5px;top:185.4px;width:465.0px;height:35.0px;background:#ececec;"></div>
<div class="abs t" style="left:512.8px;top:190.0px;font-size:22px;line-height:22px;color:#262626;letter-spacing:0.73px;">Property</div>
<div class="abs" style="left:854.2px;top:189.5px;width:1.6px;height:25.5px;background:#c6c6c6;"></div>
<div class="abs t" style="left:865.0px;top:190.0px;font-size:22px;line-height:22px;color:#262626;letter-spacing:0.27px;">Value</div>
<div class="abs" style="left:503.5px;top:220.4px;width:465.0px;height:38.4px;background:#c0c0c0;"></div>
<div class="abs" style="left:503.5px;top:258.3px;width:465.0px;height:1.3px;background:#cbcbcb;"></div>
<div class="abs t" style="left:562.8px;top:226.7px;font-size:26px;line-height:26px;color:#fff;letter-spacing:-0.19px;">Map</div>
<div class="abs" style="left:503.5px;top:259.6px;width:465.0px;height:38.2px;background:#f1f3f2;"></div>
<div class="abs" style="left:503.5px;top:297.6px;width:465.0px;height:2.0px;background:#d9d9d9;"></div>
<div class="abs" style="left:853.5px;top:259.6px;width:1.8px;height:38.2px;background:#dcdcdc;"></div>
<div class="abs t" style="left:554.2px;top:266.8px;font-size:26px;line-height:26px;color:#000;letter-spacing:-0.22px;">Class</div>
<div class="abs" style="left:503.5px;top:299.6px;width:465.0px;height:38.2px;background:#ffffff;"></div>
<div class="abs" style="left:503.5px;top:337.6px;width:465.0px;height:2.0px;background:#d9d9d9;"></div>
<div class="abs" style="left:853.5px;top:299.6px;width:1.8px;height:38.2px;background:#dcdcdc;"></div>
<div class="abs t" style="left:554.2px;top:306.8px;font-size:26px;line-height:26px;color:#000;letter-spacing:0.41px;">Orientation</div>
<div class="abs" style="left:866.2px;top:299.6px;width:101.29999999999995px;height:38px;overflow:hidden"><div class="abs t" style="left:0.0px;top:7.2px;font-size:26px;line-height:26px;color:#000;letter-spacing:-0.21px;">Orthogonal</div></div>
<div class="abs" style="left:503.5px;top:339.6px;width:465.0px;height:38.2px;background:#f1f3f2;"></div>
<div class="abs" style="left:503.5px;top:377.6px;width:465.0px;height:2.0px;background:#d9d9d9;"></div>
<div class="abs" style="left:853.5px;top:339.6px;width:1.8px;height:38.2px;background:#dcdcdc;"></div>
<div class="abs t" style="left:554.2px;top:346.8px;font-size:26px;line-height:26px;color:#b4b4b4;letter-spacing:0.53px;">Width</div>
<div class="abs" style="left:866.2px;top:339.6px;width:101.29999999999995px;height:38px;overflow:hidden"><div class="abs t" style="left:0.0px;top:7.2px;font-size:26px;line-height:26px;color:#b4b4b4;letter-spacing:-0.55px;">100</div></div>
<div class="abs" style="left:503.5px;top:379.6px;width:465.0px;height:38.2px;background:#ffffff;"></div>
<div class="abs" style="left:503.5px;top:417.6px;width:465.0px;height:2.0px;background:#d9d9d9;"></div>
<div class="abs" style="left:853.5px;top:379.6px;width:1.8px;height:38.2px;background:#dcdcdc;"></div>
<div class="abs t" style="left:554.2px;top:386.8px;font-size:26px;line-height:26px;color:#b4b4b4;letter-spacing:0.49px;">Height</div>
<div class="abs" style="left:866.2px;top:379.6px;width:101.29999999999995px;height:38px;overflow:hidden"><div class="abs t" style="left:0.0px;top:7.2px;font-size:26px;line-height:26px;color:#b4b4b4;letter-spacing:-0.45px;">75</div></div>
<div class="abs" style="left:503.5px;top:419.6px;width:465.0px;height:38.2px;background:#f1f3f2;"></div>
<div class="abs" style="left:503.5px;top:457.6px;width:465.0px;height:2.0px;background:#d9d9d9;"></div>
<div class="abs" style="left:853.5px;top:419.6px;width:1.8px;height:38.2px;background:#dcdcdc;"></div>
<div class="abs t" style="left:554.2px;top:426.8px;font-size:26px;line-height:26px;color:#000;letter-spacing:0.46px;">Tile Width</div>
<div class="abs" style="left:866.2px;top:419.6px;width:101.29999999999995px;height:38px;overflow:hidden"><div class="abs t" style="left:0.0px;top:7.2px;font-size:26px;line-height:26px;color:#000;letter-spacing:0.1px;">32</div></div>
<div class="abs" style="left:503.5px;top:459.6px;width:465.0px;height:38.2px;background:#ffffff;"></div>
<div class="abs" style="left:503.5px;top:497.6px;width:465.0px;height:2.0px;background:#d9d9d9;"></div>
<div class="abs" style="left:853.5px;top:459.6px;width:1.8px;height:38.2px;background:#dcdcdc;"></div>
<div class="abs t" style="left:554.2px;top:466.8px;font-size:26px;line-height:26px;color:#000;letter-spacing:0.47px;">Tile Height</div>
<div class="abs" style="left:866.2px;top:459.6px;width:101.29999999999995px;height:38px;overflow:hidden"><div class="abs t" style="left:0.0px;top:7.2px;font-size:26px;line-height:26px;color:#000;letter-spacing:0.1px;">32</div></div>
<div class="abs" style="left:503.5px;top:499.6px;width:465.0px;height:38.2px;background:#f1f3f2;"></div>
<div class="abs" style="left:503.5px;top:537.6px;width:465.0px;height:2.0px;background:#d9d9d9;"></div>
<div class="abs" style="left:853.5px;top:499.6px;width:1.8px;height:38.2px;background:#dcdcdc;"></div>
<div class="abs t" style="left:554.2px;top:506.8px;font-size:26px;line-height:26px;color:#000;letter-spacing:0.42px;">Infinite</div>
<div class="abs" style="left:871.0px;top:506.7px;width:24.6px;height:24.6px;background:#fff;border:1.5px solid #c2c2c2;border-radius:5.5px;box-sizing:border-box;"></div>
<div class="abs" style="left:503.5px;top:539.6px;width:465.0px;height:38.2px;background:#ffffff;"></div>
<div class="abs" style="left:503.5px;top:577.6px;width:465.0px;height:2.0px;background:#d9d9d9;"></div>
<div class="abs" style="left:853.5px;top:539.6px;width:1.8px;height:38.2px;background:#dcdcdc;"></div>
<div class="abs t" style="left:554.2px;top:546.8px;font-size:26px;line-height:26px;color:#000;letter-spacing:0.2px;">Tile Side Length (Hex)</div>
<div class="abs" style="left:866.2px;top:539.6px;width:101.29999999999995px;height:38px;overflow:hidden"><div class="abs t" style="left:0.0px;top:7.2px;font-size:26px;line-height:26px;color:#000;">0</div></div>
<div class="abs" style="left:503.5px;top:579.6px;width:465.0px;height:38.2px;background:#f1f3f2;"></div>
<div class="abs" style="left:503.5px;top:617.6px;width:465.0px;height:2.0px;background:#d9d9d9;"></div>
<div class="abs" style="left:853.5px;top:579.6px;width:1.8px;height:38.2px;background:#dcdcdc;"></div>
<div class="abs t" style="left:554.2px;top:586.8px;font-size:26px;line-height:26px;color:#000;letter-spacing:0.33px;">Stagger Axis</div>
<div class="abs" style="left:866.2px;top:579.6px;width:101.29999999999995px;height:38px;overflow:hidden"><div class="abs t" style="left:0.0px;top:7.2px;font-size:26px;line-height:26px;color:#000;">Y</div></div>
<div class="abs" style="left:503.5px;top:619.6px;width:465.0px;height:38.2px;background:#ffffff;"></div>
<div class="abs" style="left:503.5px;top:657.6px;width:465.0px;height:2.0px;background:#d9d9d9;"></div>
<div class="abs" style="left:853.5px;top:619.6px;width:1.8px;height:38.2px;background:#dcdcdc;"></div>
<div class="abs t" style="left:554.2px;top:626.8px;font-size:26px;line-height:26px;color:#000;letter-spacing:0.24px;">Stagger Index</div>
<div class="abs" style="left:866.2px;top:619.6px;width:101.29999999999995px;height:38px;overflow:hidden"><div class="abs t" style="left:0.0px;top:7.2px;font-size:26px;line-height:26px;color:#000;letter-spacing:0.29px;">Odd</div></div>
<div class="abs" style="left:503.5px;top:659.6px;width:465.0px;height:38.2px;background:#f1f3f2;"></div>
<div class="abs" style="left:503.5px;top:697.6px;width:465.0px;height:2.0px;background:#d9d9d9;"></div>
<div class="abs" style="left:853.5px;top:659.6px;width:1.8px;height:38.2px;background:#dcdcdc;"></div>
<div class="abs t" style="left:554.2px;top:666.8px;font-size:26px;line-height:26px;color:#000;letter-spacing:-0.05px;">Parallax Origin</div>
<svg class="abs" style="left:516.8px;top:674.3px" width="16.4" height="10.6" viewBox="-8.2 -5.3 16.4 10.6"><path d="M-6.2 -3.3L0 3.3L6.2 -3.3" fill="none" stroke="#b8b8b8" stroke-width="2.8" stroke-linecap="round" stroke-linejoin="round"/></svg>
<div class="abs" style="left:866.2px;top:659.6px;width:101.29999999999995px;height:38px;overflow:hidden"><div class="abs t" style="left:0.0px;top:7.2px;font-size:26px;line-height:26px;color:#000;letter-spacing:0.76px;">(0.00, 0.00)</div></div>
<div class="abs" style="left:503.5px;top:699.6px;width:465.0px;height:38.2px;background:#ffffff;"></div>
<div class="abs" style="left:503.5px;top:737.6px;width:465.0px;height:2.0px;background:#d9d9d9;"></div>
<div class="abs" style="left:853.5px;top:699.6px;width:1.8px;height:38.2px;background:#dcdcdc;"></div>
<div class="abs t" style="left:594.2px;top:706.8px;font-size:26px;line-height:26px;color:#000;">X</div>
<div class="abs" style="left:866.2px;top:699.6px;width:101.29999999999995px;height:38px;overflow:hidden"><div class="abs t" style="left:0.0px;top:7.2px;font-size:26px;line-height:26px;color:#000;letter-spacing:0.73px;">0.00</div></div>
<div class="abs" style="left:503.5px;top:739.6px;width:465.0px;height:38.2px;background:#f1f3f2;"></div>
<div class="abs" style="left:503.5px;top:777.6px;width:465.0px;height:2.0px;background:#d9d9d9;"></div>
<div class="abs" style="left:853.5px;top:739.6px;width:1.8px;height:38.2px;background:#dcdcdc;"></div>
<div class="abs t" style="left:594.2px;top:746.8px;font-size:26px;line-height:26px;color:#000;">Y</div>
<div class="abs" style="left:866.2px;top:739.6px;width:101.29999999999995px;height:38px;overflow:hidden"><div class="abs t" style="left:0.0px;top:7.2px;font-size:26px;line-height:26px;color:#000;letter-spacing:0.73px;">0.00</div></div>
<div class="abs" style="left:503.5px;top:779.6px;width:465.0px;height:38.2px;background:#ffffff;"></div>
<div class="abs" style="left:503.5px;top:817.6px;width:465.0px;height:2.0px;background:#d9d9d9;"></div>
<div class="abs" style="left:853.5px;top:779.6px;width:1.8px;height:38.2px;background:#dcdcdc;"></div>
<div class="abs t" style="left:554.2px;top:786.8px;font-size:26px;line-height:26px;color:#000;letter-spacing:0.15px;">Tile Layer Format</div>
<div class="abs" style="left:866.2px;top:779.6px;width:101.29999999999995px;height:38px;overflow:hidden"><div class="abs t" style="left:0.0px;top:7.2px;font-size:26px;line-height:26px;color:#000;letter-spacing:-1.16px;">CSV</div></div>
<div class="abs" style="left:503.5px;top:819.6px;width:465.0px;height:38.2px;background:#f1f3f2;"></div>
<div class="abs" style="left:503.5px;top:857.6px;width:465.0px;height:2.0px;background:#d9d9d9;"></div>
<div class="abs" style="left:853.5px;top:819.6px;width:1.8px;height:38.2px;background:#dcdcdc;"></div>
<div class="abs t" style="left:554.2px;top:826.8px;font-size:26px;line-height:26px;color:#000;letter-spacing:0.52px;">Output Chunk Width</div>
<div class="abs" style="left:866.2px;top:819.6px;width:101.29999999999995px;height:38px;overflow:hidden"><div class="abs t" style="left:0.0px;top:7.2px;font-size:26px;line-height:26px;color:#000;letter-spacing:-0.95px;">16</div></div>
<div class="abs" style="left:503.5px;top:859.6px;width:465.0px;height:38.2px;background:#ffffff;"></div>
<div class="abs" style="left:503.5px;top:897.6px;width:465.0px;height:2.0px;background:#d9d9d9;"></div>
<div class="abs" style="left:853.5px;top:859.6px;width:1.8px;height:38.2px;background:#dcdcdc;"></div>
<div class="abs t" style="left:554.2px;top:866.8px;font-size:26px;line-height:26px;color:#000;letter-spacing:0.47px;">Output Chunk Height</div>
<div class="abs" style="left:866.2px;top:859.6px;width:101.29999999999995px;height:38px;overflow:hidden"><div class="abs t" style="left:0.0px;top:7.2px;font-size:26px;line-height:26px;color:#000;letter-spacing:-0.95px;">16</div></div>
<div class="abs" style="left:503.5px;top:899.6px;width:465.0px;height:38.2px;background:#f1f3f2;"></div>
<div class="abs" style="left:503.5px;top:937.6px;width:465.0px;height:2.0px;background:#d9d9d9;"></div>
<div class="abs" style="left:853.5px;top:899.6px;width:1.8px;height:38.2px;background:#dcdcdc;"></div>
<div class="abs t" style="left:554.2px;top:906.8px;font-size:26px;line-height:26px;color:#000;letter-spacing:0.16px;">Tile Render Order</div>
<div class="abs" style="left:866.2px;top:899.6px;width:101.29999999999995px;height:38px;overflow:hidden"><div class="abs t" style="left:0.0px;top:7.2px;font-size:26px;line-height:26px;color:#000;letter-spacing:-0.14px;">Right Down</div></div>
<div class="abs" style="left:503.5px;top:939.6px;width:465.0px;height:38.2px;background:#ffffff;"></div>
<div class="abs" style="left:503.5px;top:977.6px;width:465.0px;height:2.0px;background:#d9d9d9;"></div>
<div class="abs" style="left:853.5px;top:939.6px;width:1.8px;height:38.2px;background:#dcdcdc;"></div>
<div class="abs t" style="left:554.2px;top:946.8px;font-size:26px;line-height:26px;color:#000;letter-spacing:0.16px;">Compression Level</div>
<div class="abs" style="left:866.2px;top:939.6px;width:101.29999999999995px;height:38px;overflow:hidden"><div class="abs t" style="left:0.0px;top:7.2px;font-size:26px;line-height:26px;color:#000;letter-spacing:-0.3px;">-1</div></div>
<div class="abs" style="left:503.5px;top:979.6px;width:465.0px;height:38.2px;background:#f1f3f2;"></div>
<div class="abs" style="left:503.5px;top:1017.6px;width:465.0px;height:2.0px;background:#d9d9d9;"></div>
<div class="abs" style="left:853.5px;top:979.6px;width:1.8px;height:38.2px;background:#dcdcdc;"></div>
<div class="abs t" style="left:554.2px;top:986.8px;font-size:26px;line-height:26px;color:#000;letter-spacing:0.31px;">Background Color</div>
<svg class="abs" style="left:522.0px;top:990.4px" width="10.6" height="16.4" viewBox="-5.3 -8.2 10.6 16.4"><path d="M-3.3 -6.2L3.3 0L-3.3 6.2" fill="none" stroke="#b8b8b8" stroke-width="2.8" stroke-linecap="round" stroke-linejoin="round"/></svg>
<div class="abs" style="left:866.0px;top:983.5px;width:32.5px;height:32.5px;background:#141414;"></div>
<div class="abs" style="left:919px;top:979.6px;width:49.5px;height:38px;overflow:hidden"><div class="abs t" style="left:0.5px;top:7.2px;font-size:26px;line-height:26px;color:#000;letter-spacing:0.3px;">[20, 20, 20] (255)</div></div>
<div class="abs" style="left:503.5px;top:1019.6px;width:465.0px;height:38.4px;background:#c0c0c0;"></div>
<div class="abs" style="left:503.5px;top:1057.6px;width:465.0px;height:1.5px;background:#cdcdcd;"></div>
<div class="abs t" style="left:561.8px;top:1026.4px;font-size:26px;line-height:26px;color:#fff;letter-spacing:0.37px;">Custom Properties</div>
<div class="abs" style="left:503.5px;top:1059.6px;width:465.0px;height:40.0px;background:#f1f3f2;"></div>
<div class="abs" style="left:503.5px;top:1099.6px;width:465.0px;height:40.0px;background:#fff;"></div>
<div class="abs" style="left:503.5px;top:1139.6px;width:465.0px;height:40.0px;background:#f1f3f2;"></div>
<div class="abs" style="left:503.5px;top:1179.6px;width:465.0px;height:40.0px;background:#fff;"></div>
<div class="abs" style="left:503.5px;top:1219.6px;width:465.0px;height:40.0px;background:#f1f3f2;"></div>
<div class="abs" style="left:503.5px;top:1259.6px;width:465.0px;height:40.0px;background:#fff;"></div>
<div class="abs" style="left:503.5px;top:1299.6px;width:465.0px;height:40.0px;background:#f1f3f2;"></div>
<div class="abs" style="left:503.5px;top:1339.6px;width:465.0px;height:40.0px;background:#fff;"></div>
<div class="abs" style="left:503.5px;top:1379.6px;width:465.0px;height:40.0px;background:#f1f3f2;"></div>
<div class="abs" style="left:503.5px;top:1419.6px;width:465.0px;height:40.0px;background:#fff;"></div>
<div class="abs" style="left:503.5px;top:1459.6px;width:465.0px;height:40.0px;background:#f1f3f2;"></div>
<div class="abs" style="left:503.5px;top:1499.6px;width:465.0px;height:37.9px;background:#fff;"></div>
<div class="abs" style="left:502.5px;top:1538.5px;width:469.0px;height:55.7px;background:linear-gradient(#f0f0f0,#e4e4e4 40%,#cfcfcf);"></div>
<svg class="abs" style="left:502px;top:1540px" width="200" height="54" viewBox="502 1540 200 54"><defs><linearGradient id="plg" x1="0" y1="0" x2="0" y2="1"><stop offset="0" stop-color="#5a86c9"/><stop offset="1" stop-color="#2d5aa4"/></linearGradient></defs><path d="M527.4 1558H532.6V1565.4H540V1570.6H532.6V1578H527.4V1570.6H520V1565.4H527.4Z" fill="url(#plg)" stroke="#2a55a0" stroke-width="3" stroke-linejoin="round"/><path d="M530 1559.5V1576.5M521.5 1568H538.5" stroke="#6f97d4" stroke-width="1.8" stroke-linecap="round"/><rect x="579" y="1564.4" width="22.4" height="6.8" rx="3" fill="#a9bfe2" stroke="#8ea9d6" stroke-width="1.8"/><path d="M638 1580.5L641 1572.5L659 1555.5L663 1559.5L645.5 1577Z" fill="#8fabd8" stroke="#8fabd8" stroke-width="1.2" stroke-linejoin="round"/></svg>
<div class="abs" style="left:968.4px;top:139.7px;width:3.6px;height:1454.6px;background:linear-gradient(90deg,#9a9a9a,#b0b0b0 40%,#d2d2d2);"></div>
<!-- mapview -->
<svg class="abs" style="left:0;top:0" width="3024" height="1602" viewBox="0 0 3024 1602" shape-rendering="auto"><defs><clipPath id="vclip"><rect x="972" y="139.7" width="1222.0" height="1456.3"/></clipPath><clipPath id="mclip"><rect x="905.3" y="385.5" width="1212.5" height="909.375"/></clipPath></defs><rect x="972" y="139.7" width="1222" height="1456.3" fill="#141414"/><g clip-path="url(#vclip)"><rect x="905.3" y="385.5" width="1212.5" height="909.38" fill="#040404"/><rect x="1075.05" y="397.62" width="497.12" height="618.38" fill="#131313"/><rect x="1475.17" y="397.62" width="97" height="897.25" fill="#131313"/><rect x="1560.05" y="434" width="521.38" height="315.25" fill="#131313"/><rect x="1560.05" y="1028.12" width="448.62" height="266.75" fill="#131313"/><rect x="1075.05" y="1088.75" width="412.25" height="206.12" fill="#131313"/><rect x="1572.17" y="1088.75" width="424.38" height="206.12" fill="#272727"/><rect x="1923.8" y="1088.75" width="12.12" height="12.12" fill="#131313"/><rect x="1075.95" y="398.02" width="496.73" height="12.12" fill="#858585"/><rect x="1160.02" y="482.9" width="194.4" height="12.12" fill="#858585"/><rect x="1160.02" y="567.77" width="194.4" height="12.12" fill="#858585"/><rect x="1390.4" y="482.9" width="97.4" height="12.12" fill="#858585"/><rect x="1208.52" y="616.27" width="230.78" height="12.12" fill="#858585"/><rect x="1208.52" y="870.9" width="279.27" height="12.12" fill="#858585"/><rect x="1160.02" y="919.4" width="279.27" height="12.12" fill="#858585"/><rect x="1075.95" y="1004.27" width="326.98" height="12.12" fill="#858585"/><rect x="1438.9" y="1004.27" width="48.9" height="12.12" fill="#858585"/><rect x="1075.95" y="1089.15" width="411.85" height="12.12" fill="#858585"/><rect x="1560.15" y="434.4" width="521.77" height="12.12" fill="#858585"/><rect x="1560.15" y="495.02" width="461.15" height="12.12" fill="#858585"/><rect x="1560.15" y="676.9" width="400.52" height="12.12" fill="#858585"/><rect x="1996.65" y="676.9" width="24.65" height="12.12" fill="#858585"/><rect x="1560.15" y="737.52" width="521.77" height="12.12" fill="#858585"/><rect x="1560.15" y="1028.53" width="449.02" height="12.12" fill="#858585"/><rect x="1560.15" y="1089.15" width="73.15" height="12.12" fill="#858585"/><rect x="1669.27" y="1089.15" width="73.15" height="12.12" fill="#858585"/><rect x="1778.4" y="1089.15" width="73.15" height="12.12" fill="#858585"/><rect x="1887.52" y="1089.15" width="36.77" height="12.12" fill="#858585"/><rect x="1936.02" y="1089.15" width="24.65" height="12.12" fill="#858585"/><rect x="1560.15" y="1222.53" width="449.02" height="12.12" fill="#858585"/><rect x="1075.95" y="398.02" width="11.72" height="618.38" fill="#858585"/><rect x="1075.95" y="1089.15" width="11.72" height="206.12" fill="#858585"/><rect x="1390.4" y="398.02" width="12.53" height="48.5" fill="#858585"/><rect x="1475.27" y="446.52" width="12.53" height="848.75" fill="#858585"/><rect x="1341.9" y="482.9" width="12.53" height="97" fill="#858585"/><rect x="1160.02" y="531.4" width="12.53" height="400.12" fill="#858585"/><rect x="1390.4" y="482.9" width="12.53" height="145.5" fill="#858585"/><rect x="1208.52" y="616.27" width="12.53" height="206.12" fill="#858585"/><rect x="1208.52" y="858.77" width="12.53" height="24.25" fill="#858585"/><rect x="1390.4" y="967.9" width="12.53" height="48.5" fill="#858585"/><rect x="1560.15" y="398.02" width="12.53" height="60.62" fill="#858585"/><rect x="1560.15" y="495.02" width="12.53" height="194" fill="#858585"/><rect x="1560.15" y="725.4" width="12.53" height="327.38" fill="#858585"/><rect x="1560.15" y="1089.15" width="12.53" height="206.12" fill="#858585"/><rect x="2008.77" y="495.02" width="12.53" height="24.25" fill="#858585"/><rect x="2008.77" y="555.65" width="12.53" height="133.38" fill="#858585"/><rect x="2069.4" y="434.4" width="12.53" height="315.25" fill="#858585"/><rect x="1996.65" y="1028.53" width="12.53" height="266.75" fill="#858585"/><rect x="1669.27" y="1089.15" width="12.53" height="206.12" fill="#858585"/><rect x="1778.4" y="1089.15" width="12.53" height="206.12" fill="#858585"/><rect x="1887.52" y="1089.15" width="12.53" height="206.12" fill="#858585"/><rect x="1536.3" y="410.15" width="24.1" height="24.3" fill="#030303"/><rect x="1537.4" y="411.75" width="22" height="13.2" fill="#a9a9a9"/><path d="M1538.8 421.35L1558.1 413.15" stroke="#e6e6e6" stroke-width="1.7"/><rect x="1537.4" y="427.25" width="22" height="5.7" fill="#6f6f6f"/><rect x="1221.05" y="495.02" width="24.1" height="24.3" fill="#030303"/><rect x="1222.15" y="496.62" width="22" height="13.2" fill="#a9a9a9"/><path d="M1223.55 506.23L1242.85 498.02" stroke="#e6e6e6" stroke-width="1.7"/><rect x="1222.15" y="512.12" width="22" height="5.7" fill="#6f6f6f"/><rect x="1269.55" y="495.02" width="24.1" height="24.3" fill="#030303"/><rect x="1270.65" y="496.62" width="22" height="13.2" fill="#a9a9a9"/><path d="M1272.05 506.23L1291.35 498.02" stroke="#e6e6e6" stroke-width="1.7"/><rect x="1270.65" y="512.12" width="22" height="5.7" fill="#6f6f6f"/><rect x="1318.05" y="495.02" width="24.1" height="24.3" fill="#030303"/><rect x="1319.15" y="496.62" width="22" height="13.2" fill="#a9a9a9"/><path d="M1320.55 506.23L1339.85 498.02" stroke="#e6e6e6" stroke-width="1.7"/><rect x="1319.15" y="512.12" width="22" height="5.7" fill="#6f6f6f"/><rect x="1221.05" y="519.27" width="24.1" height="24.3" fill="#030303"/><rect x="1222.15" y="520.88" width="22" height="13.2" fill="#a9a9a9"/><path d="M1223.55 530.48L1242.85 522.27" stroke="#e6e6e6" stroke-width="1.7"/><rect x="1222.15" y="536.38" width="22" height="5.7" fill="#6f6f6f"/><rect x="1269.55" y="519.27" width="24.1" height="24.3" fill="#030303"/><rect x="1270.65" y="520.88" width="22" height="13.2" fill="#a9a9a9"/><path d="M1272.05 530.48L1291.35 522.27" stroke="#e6e6e6" stroke-width="1.7"/><rect x="1270.65" y="536.38" width="22" height="5.7" fill="#6f6f6f"/><rect x="1318.05" y="519.27" width="24.1" height="24.3" fill="#030303"/><rect x="1319.15" y="520.88" width="22" height="13.2" fill="#a9a9a9"/><path d="M1320.55 530.48L1339.85 522.27" stroke="#e6e6e6" stroke-width="1.7"/><rect x="1319.15" y="536.38" width="22" height="5.7" fill="#6f6f6f"/><rect x="1087.67" y="980.02" width="24.1" height="24.3" fill="#030303"/><rect x="1088.77" y="981.62" width="22" height="13.2" fill="#a9a9a9"/><path d="M1090.17 991.23L1109.47 983.02" stroke="#e6e6e6" stroke-width="1.7"/><rect x="1088.77" y="997.12" width="22" height="5.7" fill="#6f6f6f"/><rect x="1111.92" y="980.02" width="24.1" height="24.3" fill="#030303"/><rect x="1113.02" y="981.62" width="22" height="13.2" fill="#a9a9a9"/><path d="M1114.42 991.23L1133.72 983.02" stroke="#e6e6e6" stroke-width="1.7"/><rect x="1113.02" y="997.12" width="22" height="5.7" fill="#6f6f6f"/><rect x="1984.92" y="579.9" width="24.1" height="24.3" fill="#030303"/><rect x="1986.02" y="581.5" width="22" height="13.2" fill="#a9a9a9"/><path d="M1987.42 591.1L2006.72 582.9" stroke="#e6e6e6" stroke-width="1.7"/><rect x="1986.02" y="597" width="22" height="5.7" fill="#6f6f6f"/><rect x="1984.92" y="604.15" width="24.1" height="24.3" fill="#030303"/><rect x="1986.02" y="605.75" width="22" height="13.2" fill="#a9a9a9"/><path d="M1987.42 615.35L2006.72 607.15" stroke="#e6e6e6" stroke-width="1.7"/><rect x="1986.02" y="621.25" width="22" height="5.7" fill="#6f6f6f"/><rect x="1984.92" y="628.4" width="24.1" height="24.3" fill="#030303"/><rect x="1986.02" y="630" width="22" height="13.2" fill="#a9a9a9"/><path d="M1987.42 639.6L2006.72 631.4" stroke="#e6e6e6" stroke-width="1.7"/><rect x="1986.02" y="645.5" width="22" height="5.7" fill="#6f6f6f"/><rect x="1233.17" y="640.62" width="23.65" height="11.3" fill="#030303"/><rect x="1234.17" y="642.12" width="21.2" height="5.8" fill="#787878"/><rect x="1235.88" y="649.52" width="3" height="1.4" fill="#6c6c6c"/><rect x="1250.88" y="649.52" width="3" height="1.4" fill="#6c6c6c"/><rect x="1233.38" y="652.55" width="23.05" height="24.2" fill="#030303"/><rect x="1234.27" y="654.15" width="21.25" height="16.9" fill="#b5b5b5"/><rect x="1234.27" y="672.25" width="21.25" height="1.8" fill="#9a9a9a"/><rect x="1234.27" y="674.05" width="2" height="1.2" fill="#9a9a9a"/><rect x="1253.52" y="674.05" width="2" height="1.2" fill="#9a9a9a"/><rect x="1233.17" y="677" width="23.65" height="11.3" fill="#030303"/><rect x="1234.17" y="678.5" width="21.2" height="5.8" fill="#787878"/><rect x="1235.88" y="685.9" width="3" height="1.4" fill="#6c6c6c"/><rect x="1250.88" y="685.9" width="3" height="1.4" fill="#6c6c6c"/><rect x="1234.88" y="688" width="5.6" height="1" fill="#030303"/><rect x="1249.88" y="688" width="5.6" height="1" fill="#030303"/><rect x="1281.67" y="640.62" width="23.65" height="11.3" fill="#030303"/><rect x="1282.67" y="642.12" width="21.2" height="5.8" fill="#787878"/><rect x="1284.38" y="649.52" width="3" height="1.4" fill="#6c6c6c"/><rect x="1299.38" y="649.52" width="3" height="1.4" fill="#6c6c6c"/><rect x="1281.88" y="652.55" width="23.05" height="24.2" fill="#030303"/><rect x="1282.77" y="654.15" width="21.25" height="16.9" fill="#b5b5b5"/><rect x="1282.77" y="672.25" width="21.25" height="1.8" fill="#9a9a9a"/><rect x="1282.77" y="674.05" width="2" height="1.2" fill="#9a9a9a"/><rect x="1302.02" y="674.05" width="2" height="1.2" fill="#9a9a9a"/><rect x="1281.67" y="677" width="23.65" height="11.3" fill="#030303"/><rect x="1282.67" y="678.5" width="21.2" height="5.8" fill="#787878"/><rect x="1284.38" y="685.9" width="3" height="1.4" fill="#6c6c6c"/><rect x="1299.38" y="685.9" width="3" height="1.4" fill="#6c6c6c"/><rect x="1283.38" y="688" width="5.6" height="1" fill="#030303"/><rect x="1298.38" y="688" width="5.6" height="1" fill="#030303"/><rect x="1330.17" y="640.62" width="23.65" height="11.3" fill="#030303"/><rect x="1331.17" y="642.12" width="21.2" height="5.8" fill="#787878"/><rect x="1332.88" y="649.52" width="3" height="1.4" fill="#6c6c6c"/><rect x="1347.88" y="649.52" width="3" height="1.4" fill="#6c6c6c"/><rect x="1330.38" y="652.55" width="23.05" height="24.2" fill="#030303"/><rect x="1331.27" y="654.15" width="21.25" height="16.9" fill="#b5b5b5"/><rect x="1331.27" y="672.25" width="21.25" height="1.8" fill="#9a9a9a"/><rect x="1331.27" y="674.05" width="2" height="1.2" fill="#9a9a9a"/><rect x="1350.52" y="674.05" width="2" height="1.2" fill="#9a9a9a"/><rect x="1330.17" y="677" width="23.65" height="11.3" fill="#030303"/><rect x="1331.17" y="678.5" width="21.2" height="5.8" fill="#787878"/><rect x="1332.88" y="685.9" width="3" height="1.4" fill="#6c6c6c"/><rect x="1347.88" y="685.9" width="3" height="1.4" fill="#6c6c6c"/><rect x="1331.88" y="688" width="5.6" height="1" fill="#030303"/><rect x="1346.88" y="688" width="5.6" height="1" fill="#030303"/><rect x="1378.67" y="640.62" width="23.65" height="11.3" fill="#030303"/><rect x="1379.67" y="642.12" width="21.2" height="5.8" fill="#787878"/><rect x="1381.38" y="649.52" width="3" height="1.4" fill="#6c6c6c"/><rect x="1396.38" y="649.52" width="3" height="1.4" fill="#6c6c6c"/><rect x="1378.88" y="652.55" width="23.05" height="24.2" fill="#030303"/><rect x="1379.77" y="654.15" width="21.25" height="16.9" fill="#b5b5b5"/><rect x="1379.77" y="672.25" width="21.25" height="1.8" fill="#9a9a9a"/><rect x="1379.77" y="674.05" width="2" height="1.2" fill="#9a9a9a"/><rect x="1399.02" y="674.05" width="2" height="1.2" fill="#9a9a9a"/><rect x="1378.67" y="677" width="23.65" height="11.3" fill="#030303"/><rect x="1379.67" y="678.5" width="21.2" height="5.8" fill="#787878"/><rect x="1381.38" y="685.9" width="3" height="1.4" fill="#6c6c6c"/><rect x="1396.38" y="685.9" width="3" height="1.4" fill="#6c6c6c"/><rect x="1380.38" y="688" width="5.6" height="1" fill="#030303"/><rect x="1395.38" y="688" width="5.6" height="1" fill="#030303"/><rect x="1609.05" y="531.5" width="47.9" height="11.3" fill="#030303"/><rect x="1610.05" y="533" width="20.8" height="5.8" fill="#787878"/><rect x="1611.75" y="540.4" width="3" height="1.4" fill="#6c6c6c"/><rect x="1626.75" y="540.4" width="3" height="1.4" fill="#6c6c6c"/><rect x="1635" y="533" width="20.5" height="5.8" fill="#787878"/><rect x="1636" y="540.4" width="3" height="1.4" fill="#6c6c6c"/><rect x="1651" y="540.4" width="3" height="1.4" fill="#6c6c6c"/><rect x="1597.12" y="543.42" width="71.55" height="24.2" fill="#030303"/><rect x="1598.02" y="545.02" width="69.75" height="16.9" fill="#b5b5b5"/><rect x="1598.02" y="563.12" width="69.75" height="1.8" fill="#9a9a9a"/><rect x="1598.02" y="564.92" width="2" height="1.2" fill="#9a9a9a"/><rect x="1665.77" y="564.92" width="2" height="1.2" fill="#9a9a9a"/><rect x="1609.05" y="567.88" width="47.9" height="11.3" fill="#030303"/><rect x="1610.05" y="569.38" width="20.8" height="5.8" fill="#787878"/><rect x="1611.75" y="576.77" width="3" height="1.4" fill="#6c6c6c"/><rect x="1626.75" y="576.77" width="3" height="1.4" fill="#6c6c6c"/><rect x="1610.75" y="578.88" width="5.6" height="1" fill="#030303"/><rect x="1625.75" y="578.88" width="5.6" height="1" fill="#030303"/><rect x="1635" y="569.38" width="20.5" height="5.8" fill="#787878"/><rect x="1636" y="576.77" width="3" height="1.4" fill="#6c6c6c"/><rect x="1651" y="576.77" width="3" height="1.4" fill="#6c6c6c"/><rect x="1635" y="578.88" width="5.6" height="1" fill="#030303"/><rect x="1650" y="578.88" width="5.6" height="1" fill="#030303"/><rect x="1706.05" y="531.5" width="47.9" height="11.3" fill="#030303"/><rect x="1707.05" y="533" width="20.8" height="5.8" fill="#787878"/><rect x="1708.75" y="540.4" width="3" height="1.4" fill="#6c6c6c"/><rect x="1723.75" y="540.4" width="3" height="1.4" fill="#6c6c6c"/><rect x="1732" y="533" width="20.5" height="5.8" fill="#787878"/><rect x="1733" y="540.4" width="3" height="1.4" fill="#6c6c6c"/><rect x="1748" y="540.4" width="3" height="1.4" fill="#6c6c6c"/><rect x="1694.12" y="543.42" width="71.55" height="24.2" fill="#030303"/><rect x="1695.02" y="545.02" width="69.75" height="16.9" fill="#b5b5b5"/><rect x="1695.02" y="563.12" width="69.75" height="1.8" fill="#9a9a9a"/><rect x="1695.02" y="564.92" width="2" height="1.2" fill="#9a9a9a"/><rect x="1762.77" y="564.92" width="2" height="1.2" fill="#9a9a9a"/><rect x="1706.05" y="567.88" width="47.9" height="11.3" fill="#030303"/><rect x="1707.05" y="569.38" width="20.8" height="5.8" fill="#787878"/><rect x="1708.75" y="576.77" width="3" height="1.4" fill="#6c6c6c"/><rect x="1723.75" y="576.77" width="3" height="1.4" fill="#6c6c6c"/><rect x="1707.75" y="578.88" width="5.6" height="1" fill="#030303"/><rect x="1722.75" y="578.88" width="5.6" height="1" fill="#030303"/><rect x="1732" y="569.38" width="20.5" height="5.8" fill="#787878"/><rect x="1733" y="576.77" width="3" height="1.4" fill="#6c6c6c"/><rect x="1748" y="576.77" width="3" height="1.4" fill="#6c6c6c"/><rect x="1732" y="578.88" width="5.6" height="1" fill="#030303"/><rect x="1747" y="578.88" width="5.6" height="1" fill="#030303"/><rect x="1609.05" y="604.25" width="47.9" height="11.3" fill="#030303"/><rect x="1610.05" y="605.75" width="20.8" height="5.8" fill="#787878"/><rect x="1611.75" y="613.15" width="3" height="1.4" fill="#6c6c6c"/><rect x="1626.75" y="613.15" width="3" height="1.4" fill="#6c6c6c"/><rect x="1635" y="605.75" width="20.5" height="5.8" fill="#787878"/><rect x="1636" y="613.15" width="3" height="1.4" fill="#6c6c6c"/><rect x="1651" y="613.15" width="3" height="1.4" fill="#6c6c6c"/><rect x="1597.12" y="616.17" width="71.55" height="24.2" fill="#030303"/><rect x="1598.02" y="617.77" width="69.75" height="16.9" fill="#b5b5b5"/><rect x="1598.02" y="635.88" width="69.75" height="1.8" fill="#9a9a9a"/><rect x="1598.02" y="637.67" width="2" height="1.2" fill="#9a9a9a"/><rect x="1665.77" y="637.67" width="2" height="1.2" fill="#9a9a9a"/><rect x="1609.05" y="640.62" width="47.9" height="11.3" fill="#030303"/><rect x="1610.05" y="642.12" width="20.8" height="5.8" fill="#787878"/><rect x="1611.75" y="649.52" width="3" height="1.4" fill="#6c6c6c"/><rect x="1626.75" y="649.52" width="3" height="1.4" fill="#6c6c6c"/><rect x="1610.75" y="651.62" width="5.6" height="1" fill="#030303"/><rect x="1625.75" y="651.62" width="5.6" height="1" fill="#030303"/><rect x="1635" y="642.12" width="20.5" height="5.8" fill="#787878"/><rect x="1636" y="649.52" width="3" height="1.4" fill="#6c6c6c"/><rect x="1651" y="649.52" width="3" height="1.4" fill="#6c6c6c"/><rect x="1635" y="651.62" width="5.6" height="1" fill="#030303"/><rect x="1650" y="651.62" width="5.6" height="1" fill="#030303"/><rect x="1706.05" y="604.25" width="47.9" height="11.3" fill="#030303"/><rect x="1707.05" y="605.75" width="20.8" height="5.8" fill="#787878"/><rect x="1708.75" y="613.15" width="3" height="1.4" fill="#6c6c6c"/><rect x="1723.75" y="613.15" width="3" height="1.4" fill="#6c6c6c"/><rect x="1732" y="605.75" width="20.5" height="5.8" fill="#787878"/><rect x="1733" y="613.15" width="3" height="1.4" fill="#6c6c6c"/><rect x="1748" y="613.15" width="3" height="1.4" fill="#6c6c6c"/><rect x="1694.12" y="616.17" width="71.55" height="24.2" fill="#030303"/><rect x="1695.02" y="617.77" width="69.75" height="16.9" fill="#b5b5b5"/><rect x="1695.02" y="635.88" width="69.75" height="1.8" fill="#9a9a9a"/><rect x="1695.02" y="637.67" width="2" height="1.2" fill="#9a9a9a"/><rect x="1762.77" y="637.67" width="2" height="1.2" fill="#9a9a9a"/><rect x="1706.05" y="640.62" width="47.9" height="11.3" fill="#030303"/><rect x="1707.05" y="642.12" width="20.8" height="5.8" fill="#787878"/><rect x="1708.75" y="649.52" width="3" height="1.4" fill="#6c6c6c"/><rect x="1723.75" y="649.52" width="3" height="1.4" fill="#6c6c6c"/><rect x="1707.75" y="651.62" width="5.6" height="1" fill="#030303"/><rect x="1722.75" y="651.62" width="5.6" height="1" fill="#030303"/><rect x="1732" y="642.12" width="20.5" height="5.8" fill="#787878"/><rect x="1733" y="649.52" width="3" height="1.4" fill="#6c6c6c"/><rect x="1748" y="649.52" width="3" height="1.4" fill="#6c6c6c"/><rect x="1732" y="651.62" width="5.6" height="1" fill="#030303"/><rect x="1747" y="651.62" width="5.6" height="1" fill="#030303"/><rect x="1427.17" y="507.25" width="23.65" height="11.3" fill="#030303"/><rect x="1428.17" y="508.75" width="21.2" height="5.8" fill="#787878"/><rect x="1429.88" y="516.15" width="3" height="1.4" fill="#6c6c6c"/><rect x="1444.88" y="516.15" width="3" height="1.4" fill="#6c6c6c"/><rect x="1415.25" y="519.17" width="47.3" height="24.2" fill="#030303"/><rect x="1416.15" y="520.77" width="45.5" height="16.9" fill="#b5b5b5"/><rect x="1416.15" y="538.88" width="45.5" height="1.8" fill="#9a9a9a"/><rect x="1416.15" y="540.67" width="2" height="1.2" fill="#9a9a9a"/><rect x="1459.65" y="540.67" width="2" height="1.2" fill="#9a9a9a"/><rect x="1245" y="846.25" width="205.72" height="16.9" fill="#4f4f4f"/><rect x="1246.9" y="848.1" width="201.93" height="11.85" fill="#b5b5b5"/><rect x="1245" y="863.15" width="205.72" height="6.6" fill="#262626"/><rect x="1572.38" y="1101.38" width="24.2" height="47.3" fill="#030303"/><rect x="1573.97" y="1103.88" width="21.1" height="1.3" fill="#bdbdbd"/><path d="M1573.97 1108.97L1575.58 1106.97H1593.47L1595.08 1108.97L1593.47 1110.97H1575.58Z" fill="#f6f6f6"/><rect x="1573.97" y="1113.67" width="21.1" height="26.3" fill="#d9d9d9"/><rect x="1573.97" y="1113.67" width="21.1" height="4" fill="#e2e2e2"/><rect x="1573.97" y="1142.78" width="21.1" height="1" fill="#c8c8c8"/><rect x="1573.97" y="1145.88" width="21.1" height="1.1" fill="#c8c8c8"/><rect x="1573.97" y="1146.88" width="1.4" height="1.4" fill="#c8c8c8"/><rect x="1593.67" y="1146.88" width="1.4" height="1.4" fill="#c8c8c8"/><rect x="1681.5" y="1101.38" width="24.2" height="47.3" fill="#030303"/><rect x="1683.1" y="1103.88" width="21.1" height="1.3" fill="#bdbdbd"/><path d="M1683.1 1108.97L1684.7 1106.97H1702.6L1704.2 1108.97L1702.6 1110.97H1684.7Z" fill="#f6f6f6"/><rect x="1683.1" y="1113.67" width="21.1" height="26.3" fill="#d9d9d9"/><rect x="1683.1" y="1113.67" width="21.1" height="4" fill="#e2e2e2"/><rect x="1683.1" y="1142.78" width="21.1" height="1" fill="#c8c8c8"/><rect x="1683.1" y="1145.88" width="21.1" height="1.1" fill="#c8c8c8"/><rect x="1683.1" y="1146.88" width="1.4" height="1.4" fill="#c8c8c8"/><rect x="1702.8" y="1146.88" width="1.4" height="1.4" fill="#c8c8c8"/><rect x="1790.62" y="1101.38" width="24.2" height="47.3" fill="#030303"/><rect x="1792.22" y="1103.88" width="21.1" height="1.3" fill="#bdbdbd"/><path d="M1792.22 1108.97L1793.83 1106.97H1811.72L1813.33 1108.97L1811.72 1110.97H1793.83Z" fill="#f6f6f6"/><rect x="1792.22" y="1113.67" width="21.1" height="26.3" fill="#d9d9d9"/><rect x="1792.22" y="1113.67" width="21.1" height="4" fill="#e2e2e2"/><rect x="1792.22" y="1142.78" width="21.1" height="1" fill="#c8c8c8"/><rect x="1792.22" y="1145.88" width="21.1" height="1.1" fill="#c8c8c8"/><rect x="1792.22" y="1146.88" width="1.4" height="1.4" fill="#c8c8c8"/><rect x="1811.92" y="1146.88" width="1.4" height="1.4" fill="#c8c8c8"/><rect x="1899.75" y="1101.38" width="24.2" height="47.3" fill="#030303"/><rect x="1901.35" y="1103.88" width="21.1" height="1.3" fill="#bdbdbd"/><path d="M1901.35 1108.97L1902.95 1106.97H1920.85L1922.45 1108.97L1920.85 1110.97H1902.95Z" fill="#f6f6f6"/><rect x="1901.35" y="1113.67" width="21.1" height="26.3" fill="#d9d9d9"/><rect x="1901.35" y="1113.67" width="21.1" height="4" fill="#e2e2e2"/><rect x="1901.35" y="1142.78" width="21.1" height="1" fill="#c8c8c8"/><rect x="1901.35" y="1145.88" width="21.1" height="1.1" fill="#c8c8c8"/><rect x="1901.35" y="1146.88" width="1.4" height="1.4" fill="#c8c8c8"/><rect x="1921.05" y="1146.88" width="1.4" height="1.4" fill="#c8c8c8"/><rect x="1645.12" y="1234.75" width="24.2" height="47.3" fill="#030303"/><rect x="1646.72" y="1237.25" width="21.1" height="1.3" fill="#bdbdbd"/><path d="M1646.72 1242.35L1648.33 1240.35H1666.22L1667.83 1242.35L1666.22 1244.35H1648.33Z" fill="#f6f6f6"/><rect x="1646.72" y="1247.05" width="21.1" height="26.3" fill="#d9d9d9"/><rect x="1646.72" y="1247.05" width="21.1" height="4" fill="#e2e2e2"/><rect x="1646.72" y="1276.15" width="21.1" height="1" fill="#c8c8c8"/><rect x="1646.72" y="1279.25" width="21.1" height="1.1" fill="#c8c8c8"/><rect x="1646.72" y="1280.25" width="1.4" height="1.4" fill="#c8c8c8"/><rect x="1666.42" y="1280.25" width="1.4" height="1.4" fill="#c8c8c8"/><rect x="1754.25" y="1234.75" width="24.2" height="47.3" fill="#030303"/><rect x="1755.85" y="1237.25" width="21.1" height="1.3" fill="#bdbdbd"/><path d="M1755.85 1242.35L1757.45 1240.35H1775.35L1776.95 1242.35L1775.35 1244.35H1757.45Z" fill="#f6f6f6"/><rect x="1755.85" y="1247.05" width="21.1" height="26.3" fill="#d9d9d9"/><rect x="1755.85" y="1247.05" width="21.1" height="4" fill="#e2e2e2"/><rect x="1755.85" y="1276.15" width="21.1" height="1" fill="#c8c8c8"/><rect x="1755.85" y="1279.25" width="21.1" height="1.1" fill="#c8c8c8"/><rect x="1755.85" y="1280.25" width="1.4" height="1.4" fill="#c8c8c8"/><rect x="1775.55" y="1280.25" width="1.4" height="1.4" fill="#c8c8c8"/><rect x="1863.38" y="1234.75" width="24.2" height="47.3" fill="#030303"/><rect x="1864.97" y="1237.25" width="21.1" height="1.3" fill="#bdbdbd"/><path d="M1864.97 1242.35L1866.58 1240.35H1884.47L1886.08 1242.35L1884.47 1244.35H1866.58Z" fill="#f6f6f6"/><rect x="1864.97" y="1247.05" width="21.1" height="26.3" fill="#d9d9d9"/><rect x="1864.97" y="1247.05" width="21.1" height="4" fill="#e2e2e2"/><rect x="1864.97" y="1276.15" width="21.1" height="1" fill="#c8c8c8"/><rect x="1864.97" y="1279.25" width="21.1" height="1.1" fill="#c8c8c8"/><rect x="1864.97" y="1280.25" width="1.4" height="1.4" fill="#c8c8c8"/><rect x="1884.67" y="1280.25" width="1.4" height="1.4" fill="#c8c8c8"/><rect x="1972.5" y="1234.75" width="24.2" height="47.3" fill="#030303"/><rect x="1974.1" y="1237.25" width="21.1" height="1.3" fill="#bdbdbd"/><path d="M1974.1 1242.35L1975.7 1240.35H1993.6L1995.2 1242.35L1993.6 1244.35H1975.7Z" fill="#f6f6f6"/><rect x="1974.1" y="1247.05" width="21.1" height="26.3" fill="#d9d9d9"/><rect x="1974.1" y="1247.05" width="21.1" height="4" fill="#e2e2e2"/><rect x="1974.1" y="1276.15" width="21.1" height="1" fill="#c8c8c8"/><rect x="1974.1" y="1279.25" width="21.1" height="1.1" fill="#c8c8c8"/><rect x="1974.1" y="1280.25" width="1.4" height="1.4" fill="#c8c8c8"/><rect x="1993.8" y="1280.25" width="1.4" height="1.4" fill="#c8c8c8"/><rect x="1572.27" y="1197.97" width="24.4" height="23.6" fill="#030303"/><rect x="1573.97" y="1198.97" width="21.1" height="16.9" fill="#b5b5b5"/><rect x="1573.97" y="1216.97" width="21.1" height="2" fill="#8a8a8a"/><rect x="1573.97" y="1218.97" width="1.4" height="1.5" fill="#8a8a8a"/><rect x="1593.67" y="1218.97" width="1.4" height="1.5" fill="#8a8a8a"/><rect x="1681.4" y="1197.97" width="24.4" height="23.6" fill="#030303"/><rect x="1683.1" y="1198.97" width="21.1" height="16.9" fill="#b5b5b5"/><rect x="1683.1" y="1216.97" width="21.1" height="2" fill="#8a8a8a"/><rect x="1683.1" y="1218.97" width="1.4" height="1.5" fill="#8a8a8a"/><rect x="1702.8" y="1218.97" width="1.4" height="1.5" fill="#8a8a8a"/><rect x="1790.52" y="1197.97" width="24.4" height="23.6" fill="#030303"/><rect x="1792.22" y="1198.97" width="21.1" height="16.9" fill="#b5b5b5"/><rect x="1792.22" y="1216.97" width="21.1" height="2" fill="#8a8a8a"/><rect x="1792.22" y="1218.97" width="1.4" height="1.5" fill="#8a8a8a"/><rect x="1811.92" y="1218.97" width="1.4" height="1.5" fill="#8a8a8a"/><rect x="1899.65" y="1197.97" width="24.4" height="23.6" fill="#030303"/><rect x="1901.35" y="1198.97" width="21.1" height="16.9" fill="#b5b5b5"/><rect x="1901.35" y="1216.97" width="21.1" height="2" fill="#8a8a8a"/><rect x="1901.35" y="1218.97" width="1.4" height="1.5" fill="#8a8a8a"/><rect x="1921.05" y="1218.97" width="1.4" height="1.5" fill="#8a8a8a"/><path d="M965.92 397.62H2117.8M965.92 409.75H2117.8M965.92 421.88H2117.8M965.92 434H2117.8M965.92 446.12H2117.8M965.92 458.25H2117.8M965.92 470.38H2117.8M965.92 482.5H2117.8M965.92 494.62H2117.8M965.92 518.88H2117.8M965.92 531H2117.8M965.92 543.12H2117.8M965.92 555.25H2117.8M965.92 567.38H2117.8M965.92 579.5H2117.8M965.92 591.62H2117.8M965.92 603.75H2117.8M965.92 615.88H2117.8M965.92 640.12H2117.8M965.92 652.25H2117.8M965.92 664.38H2117.8M965.92 676.5H2117.8M965.92 688.62H2117.8M965.92 700.75H2117.8M965.92 712.88H2117.8M965.92 725H2117.8M965.92 737.12H2117.8M965.92 761.38H2117.8M965.92 773.5H2117.8M965.92 785.62H2117.8M965.92 797.75H2117.8M965.92 809.88H2117.8M965.92 822H2117.8M965.92 834.12H2117.8M965.92 846.25H2117.8M965.92 858.38H2117.8M965.92 882.62H2117.8M965.92 894.75H2117.8M965.92 906.88H2117.8M965.92 919H2117.8M965.92 931.12H2117.8M965.92 943.25H2117.8M965.92 955.38H2117.8M965.92 967.5H2117.8M965.92 979.62H2117.8M965.92 1003.88H2117.8M965.92 1016H2117.8M965.92 1028.12H2117.8M965.92 1040.25H2117.8M965.92 1052.38H2117.8M965.92 1064.5H2117.8M965.92 1076.62H2117.8M965.92 1088.75H2117.8M965.92 1100.88H2117.8M965.92 1125.12H2117.8M965.92 1137.25H2117.8M965.92 1149.38H2117.8M965.92 1161.5H2117.8M965.92 1173.62H2117.8M965.92 1185.75H2117.8M965.92 1197.88H2117.8M965.92 1210H2117.8M965.92 1222.12H2117.8M965.92 1246.38H2117.8M965.92 1258.5H2117.8M965.92 1270.62H2117.8M965.92 1282.75H2117.8M965.92 1294.88H2117.8M978.05 385.5V1294.88M990.17 385.5V1294.88M1002.3 385.5V1294.88M1014.42 385.5V1294.88M1038.67 385.5V1294.88M1050.8 385.5V1294.88M1062.92 385.5V1294.88M1075.05 385.5V1294.88M1087.17 385.5V1294.88M1099.3 385.5V1294.88M1111.42 385.5V1294.88M1123.55 385.5V1294.88M1135.67 385.5V1294.88M1159.92 385.5V1294.88M1172.05 385.5V1294.88M1184.17 385.5V1294.88M1196.3 385.5V1294.88M1208.42 385.5V1294.88M1220.55 385.5V1294.88M1232.67 385.5V1294.88M1244.8 385.5V1294.88M1256.92 385.5V1294.88M1281.17 385.5V1294.88M1293.3 385.5V1294.88M1305.42 385.5V1294.88M1317.55 385.5V1294.88M1329.67 385.5V1294.88M1341.8 385.5V1294.88M1353.92 385.5V1294.88M1366.05 385.5V1294.88M1378.17 385.5V1294.88M1402.42 385.5V1294.88M1414.55 385.5V1294.88M1426.67 385.5V1294.88M1438.8 385.5V1294.88M1450.92 385.5V1294.88M1463.05 385.5V1294.88M1475.17 385.5V1294.88M1487.3 385.5V1294.88M1499.42 385.5V1294.88M1523.67 385.5V1294.88M1535.8 385.5V1294.88M1547.92 385.5V1294.88M1560.05 385.5V1294.88M1572.17 385.5V1294.88M1584.3 385.5V1294.88M1596.42 385.5V1294.88M1608.55 385.5V1294.88M1620.67 385.5V1294.88M1644.92 385.5V1294.88M1657.05 385.5V1294.88M1669.17 385.5V1294.88M1681.3 385.5V1294.88M1693.42 385.5V1294.88M1705.55 385.5V1294.88M1717.67 385.5V1294.88M1729.8 385.5V1294.88M1741.92 385.5V1294.88M1766.17 385.5V1294.88M1778.3 385.5V1294.88M1790.42 385.5V1294.88M1802.55 385.5V1294.88M1814.67 385.5V1294.88M1826.8 385.5V1294.88M1838.92 385.5V1294.88M1851.05 385.5V1294.88M1863.17 385.5V1294.88M1887.42 385.5V1294.88M1899.55 385.5V1294.88M1911.67 385.5V1294.88M1923.8 385.5V1294.88M1935.92 385.5V1294.88M1948.05 385.5V1294.88M1960.17 385.5V1294.88M1972.3 385.5V1294.88M1984.42 385.5V1294.88M2008.67 385.5V1294.88M2020.8 385.5V1294.88M2032.92 385.5V1294.88M2045.05 385.5V1294.88M2057.18 385.5V1294.88M2069.3 385.5V1294.88M2081.43 385.5V1294.88M2093.55 385.5V1294.88M2105.68 385.5V1294.88" fill="none" stroke="#000" stroke-opacity=".12" stroke-width="1.6" stroke-dasharray="4.6 3.4"/><path d="M965.92 385.5H2117.8M965.92 506.75H2117.8M965.92 628H2117.8M965.92 749.25H2117.8M965.92 870.5H2117.8M965.92 991.75H2117.8M965.92 1113H2117.8M965.92 1234.25H2117.8M1026.55 385.5V1294.88M1147.8 385.5V1294.88M1269.05 385.5V1294.88M1390.3 385.5V1294.88M1511.55 385.5V1294.88M1632.8 385.5V1294.88M1754.05 385.5V1294.88M1875.3 385.5V1294.88M1996.55 385.5V1294.88M2117.8 385.5V1294.88" fill="none" stroke="#000" stroke-opacity=".5" stroke-width="2" stroke-dasharray="5.8 2.2" stroke-dashoffset=".6"/><path d="M965.92 1294.88H2117.8" stroke="#000" stroke-width="1.6"/></g><rect x="2175.2" y="575.6" width="15.6" height="594" rx="7.8" fill="#090909" stroke="#484848" stroke-width="1.5"/><rect x="1388.6" y="1577.2" width="430" height="15.6" rx="7.8" fill="#090909" stroke="#484848" stroke-width="1.5"/></svg>
<!-- right -->
<div class="abs" style="left:2194.2px;top:139.7px;width:2.4px;height:1456.0px;background:#f0f0f0;"></div>
<svg class="abs" style="left:2200.3px;top:146.3px" width="27.4" height="27.4" viewBox="-13.7 -13.7 27.4 27.4"><circle r="13.7" fill="#535353"/><path d="M-4.9 -4.9L4.9 4.9M4.9 -4.9L-4.9 4.9" stroke="#ececec" stroke-width="4.7" stroke-linecap="round"/></svg>
<svg class="abs" style="left:2236.3px;top:146.3px" width="27.4" height="27.4" viewBox="-13.7 -13.7 27.4 27.4"><circle r="13.7" fill="#535353"/><rect x="-2.6" y="-6" width="9.6" height="7.6" rx="1" fill="none" stroke="#ececec" stroke-width="2.4"/><rect x="-7" y="-2" width="9.6" height="7.6" rx="1" fill="#535353" stroke="#ececec" stroke-width="2.4"/></svg>
<div class="abs t" style="left:2045.4px;width:1200px;text-align:center;top:151.2px;font-size:22px;line-height:22px;color:#262626;letter-spacing:0.74px;">Layers</div>
<div class="abs" style="left:2196.6px;top:181.5px;width:830.0px;height:2.0px;background:#bababa;"></div>
<div class="abs t" style="left:2196.6px;top:195.7px;font-size:26px;line-height:26px;color:#000;letter-spacing:0.52px;">Opacity:</div>
<div class="abs" style="left:2316.0px;top:201.2px;width:672.0px;height:7.8px;background:#0a7bff;border-radius:4px;"></div>
<div class="abs" style="left:2980.2px;top:185.0px;width:39.6px;height:39.6px;background:#fff;border-radius:50%;box-shadow:0 1px 2.5px rgba(0,0,0,.35),0 0 1px rgba(0,0,0,.3);"></div>
<div class="abs" style="left:2196.6px;top:257.8px;width:826.2px;height:328.6px;background:#fff;border:1px solid #c4c4c4;border-top:1.6px solid #9c9c9c;box-sizing:border-box;"></div>
<div class="abs" style="left:2198.2px;top:300.4px;width:823.4px;height:39.4px;background:#d4d4d4;"></div>
<div class="abs t" style="left:2292.6px;top:267.5px;font-size:26px;line-height:26px;color:#000;letter-spacing:0.12px;">Walls</div>
<div class="abs t" style="left:2292.6px;top:307.5px;font-size:26px;line-height:26px;color:#000;font-weight:bold;letter-spacing:0.34px;">Objects</div>
<div class="abs t" style="left:2292.6px;top:347.5px;font-size:26px;line-height:26px;color:#000;letter-spacing:0.3px;">Floor</div>
<div class="abs t" style="left:2292.6px;top:387.5px;font-size:26px;line-height:26px;color:#000;letter-spacing:0.66px;">Corridor</div>
<svg class="abs" style="left:0;top:0" width="3024" height="600" viewBox="0 0 3024 600"><rect x="2250" y="267.9" width="26" height="26" fill="#2b4682"/><rect x="2252.0" y="269.9" width="6" height="6" fill="#c9dbf8"/><rect x="2252.0" y="277.9" width="6" height="6" fill="#c9dbf8"/><rect x="2252.0" y="285.9" width="6" height="6" fill="#c9dbf8"/><rect x="2260.0" y="269.9" width="6" height="6" fill="#c9dbf8"/><rect x="2260.0" y="277.9" width="6" height="6" fill="#c9dbf8"/><rect x="2260.0" y="285.9" width="6" height="6" fill="#c9dbf8"/><rect x="2268.0" y="269.9" width="6" height="6" fill="#c9dbf8"/><rect x="2268.0" y="277.9" width="6" height="6" fill="#c9dbf8"/><rect x="2268.0" y="285.9" width="6" height="6" fill="#c9dbf8"/><g transform="translate(2956 280.0)"><path d="M-14.5 0Q-7.5 -10.5 0 -10.5T14.5 0Q7.5 10.5 0 10.5T-14.5 0Z" fill="#fff" stroke="#666" stroke-width="3.2" stroke-linejoin="round"/><rect x="-5" y="-5" width="10" height="10" rx="3" fill="#666"/><rect x="-3.2" y="-4" width="2.6" height="2.6" fill="#e8e8e8"/></g><rect x="2988" y="280.0" width="19.8" height="15.8" fill="#666"/><path d="M3005 280.5V275.4Q3005 269.8 3009.6 269.8T3014.2 275.4V280.2" fill="none" stroke="#666" stroke-width="3.7"/><rect x="2250" y="307.9" width="26" height="26" fill="#4d6dab"/><rect x="2252.0" y="309.9" width="6" height="6" fill="#bfd7fa"/><rect x="2252.0" y="317.9" width="6" height="6" fill="#bfd7fa"/><rect x="2252.0" y="325.9" width="6" height="6" fill="#bfd7fa"/><rect x="2260.0" y="309.9" width="6" height="6" fill="#bfd7fa"/><rect x="2260.0" y="317.9" width="6" height="6" fill="#bfd7fa"/><rect x="2260.0" y="325.9" width="6" height="6" fill="#bfd7fa"/><rect x="2268.0" y="309.9" width="6" height="6" fill="#bfd7fa"/><rect x="2268.0" y="317.9" width="6" height="6" fill="#bfd7fa"/><rect x="2268.0" y="325.9" width="6" height="6" fill="#bfd7fa"/><g transform="translate(2956 320.0)"><path d="M-14.5 0Q-7.5 -10.5 0 -10.5T14.5 0Q7.5 10.5 0 10.5T-14.5 0Z" fill="#fff" stroke="#666" stroke-width="3.2" stroke-linejoin="round"/><rect x="-5" y="-5" width="10" height="10" rx="3" fill="#666"/><rect x="-3.2" y="-4" width="2.6" height="2.6" fill="#e8e8e8"/></g><rect x="2988" y="320.0" width="19.8" height="15.8" fill="#666"/><path d="M3005 320.5V315.4Q3005 309.8 3009.6 309.8T3014.2 315.4V320.2" fill="none" stroke="#666" stroke-width="3.7"/><rect x="2250" y="347.9" width="26" height="26" fill="#2b4682"/><rect x="2252.0" y="349.9" width="6" height="6" fill="#c9dbf8"/><rect x="2252.0" y="357.9" width="6" height="6" fill="#c9dbf8"/><rect x="2252.0" y="365.9" width="6" height="6" fill="#c9dbf8"/><rect x="2260.0" y="349.9" width="6" height="6" fill="#c9dbf8"/><rect x="2260.0" y="357.9" width="6" height="6" fill="#c9dbf8"/><rect x="2260.0" y="365.9" width="6" height="6" fill="#c9dbf8"/><rect x="2268.0" y="349.9" width="6" height="6" fill="#c9dbf8"/><rect x="2268.0" y="357.9" width="6" height="6" fill="#c9dbf8"/><rect x="2268.0" y="365.9" width="6" height="6" fill="#c9dbf8"/><g transform="translate(2956 360.0)"><path d="M-14.5 0Q-7.5 -10.5 0 -10.5T14.5 0Q7.5 10.5 0 10.5T-14.5 0Z" fill="#fff" stroke="#666" stroke-width="3.2" stroke-linejoin="round"/><rect x="-5" y="-5" width="10" height="10" rx="3" fill="#666"/><rect x="-3.2" y="-4" width="2.6" height="2.6" fill="#e8e8e8"/></g><rect x="2988" y="360.0" width="19.8" height="15.8" fill="#666"/><path d="M3005 360.5V355.4Q3005 349.8 3009.6 349.8T3014.2 355.4V360.2" fill="none" stroke="#666" stroke-width="3.7"/><rect x="2250" y="387.9" width="26" height="26" fill="#2b4682"/><rect x="2252.0" y="389.9" width="6" height="6" fill="#c9dbf8"/><rect x="2252.0" y="397.9" width="6" height="6" fill="#c9dbf8"/><rect x="2252.0" y="405.9" width="6" height="6" fill="#c9dbf8"/><rect x="2260.0" y="389.9" width="6" height="6" fill="#c9dbf8"/><rect x="2260.0" y="397.9" width="6" height="6" fill="#c9dbf8"/><rect x="2260.0" y="405.9" width="6" height="6" fill="#c9dbf8"/><rect x="2268.0" y="389.9" width="6" height="6" fill="#c9dbf8"/><rect x="2268.0" y="397.9" width="6" height="6" fill="#c9dbf8"/><rect x="2268.0" y="405.9" width="6" height="6" fill="#c9dbf8"/><g transform="translate(2956 400.0)"><path d="M-14.5 0Q-7.5 -10.5 0 -10.5T14.5 0Q7.5 10.5 0 10.5T-14.5 0Z" fill="#fff" stroke="#666" stroke-width="3.2" stroke-linejoin="round"/><rect x="-5" y="-5" width="10" height="10" rx="3" fill="#666"/><rect x="-3.2" y="-4" width="2.6" height="2.6" fill="#e8e8e8"/></g><rect x="2988" y="400.0" width="19.8" height="15.8" fill="#666"/><path d="M3005 400.5V395.4Q3005 389.8 3009.6 389.8T3014.2 395.4V400.2" fill="none" stroke="#666" stroke-width="3.7"/></svg>
<div class="abs" style="left:2196.6px;top:587.8px;width:830.0px;height:54.0px;background:linear-gradient(#f1f1f1,#e6e6e6 40%,#cecece);"></div>
<div class="abs" style="left:2196.6px;top:641.6px;width:830.0px;height:1.8px;background:#b9b9b9;"></div>
<svg class="abs" style="left:0;top:0" width="3024" height="700" viewBox="0 0 3024 700"><defs><linearGradient id="bar" x1="0" y1="0" x2="0" y2="1"><stop offset="0" stop-color="#4a86d2"/><stop offset="1" stop-color="#2a5fae"/></linearGradient></defs><g transform="translate(2210.5 600.3) scale(0.76)"><rect x="1.5" y="1.5" width="35" height="40" rx="2" fill="#000" opacity=".12"/><rect x=".8" y=".8" width="34" height="39" rx="2" fill="url(#pg)" stroke="#a6a8a3" stroke-width="1.5"/><rect x="2.4" y="2.4" width="30.8" height="35.8" rx="1" fill="none" stroke="#fff" stroke-width="1.4" opacity=".85"/><circle cx="26" cy="13.4" r="14" fill="url(#glow)"/><path d="M26.0 4.2L29.1 9.2L34.7 10.6L30.9 15.0L31.4 20.8L26.0 18.6L20.6 20.8L21.1 15.0L17.3 10.6L22.9 9.2Z" fill="#fffdf0" stroke="#fffdf0" stroke-width="2.6" stroke-linejoin="round"/></g><path d="M2233.5 633.5L2237.5 637.3L2245 629" fill="none" stroke="#111" stroke-width="2.4" stroke-linecap="butt" stroke-linejoin="miter"/><path d="M2283 601.5L2296.5 616.5H2289.5V629.5H2276.5V616.5H2269.5Z" fill="url(#bar)" stroke="#2556a0" stroke-width="1.5" stroke-linejoin="round"/><path d="M2343.3 630L2329.8 615H2336.8V602H2349.8V615H2356.8Z" fill="url(#bar)" stroke="#2556a0" stroke-width="1.5" stroke-linejoin="round"/><rect x="2395.5" y="609.5" width="23.5" height="20.5" rx="1.5" fill="#d9dde2" stroke="#8a8d90" stroke-width="1.4"/><rect x="2399" y="613" width="16.5" height="13.5" fill="#3b64a0"/><rect x="2388.8" y="601" width="25" height="21.5" rx="1.5" fill="#e4e6e8" stroke="#7d8083" stroke-width="1.4"/><rect x="2392.3" y="604.5" width="18" height="14.5" fill="#34495e"/><path d="M2392.3 614L2398 610.5L2403 614L2407 611.5L2410.3 614V619H2392.3Z" fill="#5e86c0"/><circle cx="2405.5" cy="608.5" r="1.6" fill="#e9d9a0"/><g transform="translate(2449.6 600.3) scale(1.0)"><ellipse cx="14.4" cy="30.6" rx="10.5" ry="2.2" fill="#000" opacity=".25"/><path d="M3.4 10.5L5.2 28.2Q14.4 32.8 23.6 28.2L25.4 10.5Z" fill="url(#trb)" stroke="#3f413d" stroke-width="1.5"/><path d="M7.2 15L8.4 28.6M10.8 15.6L11.5 29.8M14.4 15.8V30.2M18 15.6L17.3 29.8M21.6 15L20.4 28.6" stroke="#4b4d49" stroke-width="1.5" opacity=".7"/><path d="M.9 8.2Q.9 1 14.4 1T27.9 8.2Q27.9 15.2 14.4 15.2T.9 8.2Z" fill="url(#trr)" stroke="#4a4c48" stroke-width="1.4"/><ellipse cx="14.4" cy="5.6" rx="4.6" ry="2.3" fill="#1c1c1c"/><ellipse cx="14.4" cy="5.9" rx="7.4" ry="3.6" fill="none" stroke="#8f908c" stroke-width=".9"/></g><rect x="2502" y="592.5" width="2" height="2" fill="#3a3a3a"/><rect x="2502" y="598.5" width="2" height="2" fill="#3a3a3a"/><rect x="2502" y="604.6" width="2" height="2" fill="#3a3a3a"/><rect x="2502" y="610.6" width="2" height="2" fill="#3a3a3a"/><rect x="2502" y="616.7" width="2" height="2" fill="#3a3a3a"/><rect x="2502" y="622.7" width="2" height="2" fill="#3a3a3a"/><rect x="2502" y="628.8" width="2" height="2" fill="#3a3a3a"/><rect x="2502" y="634.8" width="2" height="2" fill="#3a3a3a"/><rect x="2544.5" y="614.5" width="14.5" height="12" fill="#f4f4f4" stroke="#e0e0e0" stroke-width="1"/><rect x="2530.5" y="601" width="13" height="11" fill="#efefef" stroke="#e2e2e2" stroke-width="1"/><rect x="2536" y="607" width="18.5" height="16.5" fill="#6e9be3" stroke="#84a9e6" stroke-width="1.2"/><rect x="2592.5" y="613.5" width="19.2" height="16.5" rx="1" fill="#6e6e6e"/><path d="M2596.6 614V609Q2596.6 602.3 2602.1 602.3T2607.6 609V614" fill="none" stroke="#6e6e6e" stroke-width="3.2"/><rect x="2988.5" y="606.5" width="17.5" height="17.5" fill="#fff" stroke="#222" stroke-width="2"/><path d="M2997.3 598.5V602M2997.3 628.5V632M2980.5 615.3H2984M3010.5 615.3H3014M2985 603L2987 605M3007.5 625.5L3009.5 627.5M3009.5 603L3007.5 605M2985 627.5L2987 625.5" stroke="#222" stroke-width="1.8" stroke-dasharray="2 1.2"/></svg>
<div class="abs" style="left:2197.6px;top:643.6px;width:825.0px;height:19.0px;background:#e9e9e9;border:1px solid #dedede;border-top:none;border-radius:0 0 12px 12px;box-sizing:border-box;"></div>
<div class="abs" style="left:2400.0px;top:645.2px;width:420.0px;height:39.8px;background:#fff;border-radius:10px;box-shadow:0 .5px 1.5px rgba(0,0,0,.25);"></div>
<div class="abs" style="left:2697.6px;top:645.2px;width:122.4px;height:39.8px;background:linear-gradient(#2a8cff,#0772f5);border-radius:0 10px 10px 0;"></div>
<div class="abs" style="left:2553.4px;top:648.5px;width:1.4px;height:33.0px;background:#e0e0e0;"></div>
<div class="abs t" style="left:2418.6px;top:653.5px;font-size:26px;line-height:26px;color:#222;letter-spacing:0.76px;">Mini-map</div>
<div class="abs t" style="left:2581.0px;top:653.5px;font-size:26px;line-height:26px;color:#222;letter-spacing:0.55px;">Objects</div>
<div class="abs t" style="left:2722.5px;top:653.5px;font-size:26px;line-height:26px;color:#fff;letter-spacing:0.25px;">Layers</div>
<div class="abs" style="left:2196.6px;top:686.0px;width:830.0px;height:2.0px;background:#b4b4b4;"></div>
<svg class="abs" style="left:2200.3px;top:694.5px" width="27.4" height="27.4" viewBox="-13.7 -13.7 27.4 27.4"><circle r="13.7" fill="#535353"/><path d="M-4.9 -4.9L4.9 4.9M4.9 -4.9L-4.9 4.9" stroke="#ececec" stroke-width="4.7" stroke-linecap="round"/></svg>
<svg class="abs" style="left:2236.3px;top:694.5px" width="27.4" height="27.4" viewBox="-13.7 -13.7 27.4 27.4"><circle r="13.7" fill="#535353"/><rect x="-2.6" y="-6" width="9.6" height="7.6" rx="1" fill="none" stroke="#ececec" stroke-width="2.4"/><rect x="-7" y="-2" width="9.6" height="7.6" rx="1" fill="#535353" stroke="#ececec" stroke-width="2.4"/></svg>
<div class="abs t" style="left:2045.4px;width:1200px;text-align:center;top:699.4px;font-size:22px;line-height:22px;color:#262626;letter-spacing:0.81px;">Tilesets</div>
<div class="abs" style="left:2196.6px;top:728.9px;width:830.0px;height:2.0px;background:#b9b9b9;"></div>
<div class="abs" style="left:2197.6px;top:752.0px;width:773.4px;height:30.0px;background:#e6e6e6;border:1px solid #d9d9d9;border-radius:10px 10px 0 0;box-sizing:border-box;"></div>
<div class="abs" style="left:2222.0px;top:732.3px;width:724.0px;height:40.6px;background:#fff;border-radius:10px;box-shadow:0 .5px 1.5px rgba(0,0,0,.25);"></div>
<div class="abs" style="left:2222.0px;top:732.3px;width:88.0px;height:40.6px;background:linear-gradient(#2a8cff,#0772f5);border-radius:10px 0 0 10px;"></div>
<div class="abs" style="left:2399.1px;top:735.5px;width:1.4px;height:34.5px;background:#e0e0e0;"></div>
<div class="abs" style="left:2641.1px;top:735.5px;width:1.4px;height:34.5px;background:#e0e0e0;"></div>
<div class="abs" style="left:2745.1px;top:735.5px;width:1.4px;height:34.5px;background:#e0e0e0;"></div>
<div class="abs" style="left:2852.9px;top:735.5px;width:1.4px;height:34.5px;background:#e0e0e0;"></div>
<div class="abs t" style="left:1663.0px;width:1200px;text-align:center;top:741.4px;font-size:26px;line-height:26px;color:#fff;letter-spacing:0.38px;">bed</div>
<div class="abs t" style="left:1755.8px;width:1200px;text-align:center;top:741.4px;font-size:26px;line-height:26px;color:#222;letter-spacing:0.2px;">box</div>
<div class="abs t" style="left:1923.5px;width:1200px;text-align:center;top:741.4px;font-size:26px;line-height:26px;color:#222;letter-spacing:0.71px;">controldeck_tile</div>
<div class="abs t" style="left:2095.9px;width:1200px;text-align:center;top:741.4px;font-size:26px;line-height:26px;color:#222;letter-spacing:0.89px;">floor</div>
<div class="abs t" style="left:2202.0px;width:1200px;text-align:center;top:741.4px;font-size:26px;line-height:26px;color:#222;letter-spacing:0.43px;">table</div>
<div class="abs t" style="left:2303.9px;width:1200px;text-align:center;top:741.4px;font-size:26px;line-height:26px;color:#222;letter-spacing:0.18px;">wall</div>
<div class="abs" style="left:2972.2px;top:732.3px;width:50.3px;height:41.2px;background:linear-gradient(#e3e3e3,#fafafa);border:1.8px solid #a9a9a9;box-sizing:border-box;"></div>
<svg class="abs" style="left:2980px;top:742px" width="36" height="28" viewBox="0 0 36 28"><path d="M4.7 7L18 20.3L31.3 7" fill="none" stroke="#242424" stroke-width="5" stroke-linecap="round" stroke-linejoin="round"/></svg>
<div class="abs" style="left:2196.6px;top:774.4px;width:825.8px;height:751.6px;background:#bfbfbf;border:1px solid #8c8c8c;border-right-color:#a9a9a9;box-sizing:border-box;"></div>
<svg class="abs" style="left:0;top:0" width="3024" height="1000" viewBox="0 0 3024 1000"><rect x="2204.45" y="775.60" width="43.75" height="6.25" fill="#4a4a4a"/><rect x="2250.20" y="775.60" width="43.75" height="6.25" fill="#4a4a4a"/><rect x="2198.20" y="781.85" width="50.00" height="43.75" fill="#0c0c0c"/><rect x="2250.20" y="781.85" width="50.00" height="43.75" fill="#0c0c0c"/><rect x="2204.45" y="788.10" width="43.75" height="6.25" fill="#6e6e6e"/><rect x="2250.20" y="788.10" width="43.75" height="6.25" fill="#6e6e6e"/><rect x="2210.70" y="800.60" width="37.50" height="18.75" fill="#f4f4f4"/><rect x="2250.20" y="800.60" width="37.50" height="18.75" fill="#f4f4f4"/><rect x="2204.45" y="806.85" width="43.75" height="6.25" fill="#f4f4f4"/><rect x="2250.20" y="806.85" width="43.75" height="6.25" fill="#f4f4f4"/><rect x="2198.20" y="827.60" width="50.00" height="50.00" fill="#0c0c0c"/><rect x="2198.20" y="879.60" width="50.00" height="50.00" fill="#0c0c0c"/><rect x="2198.20" y="931.60" width="50.00" height="43.75" fill="#0c0c0c"/><rect x="2250.20" y="827.60" width="50.00" height="50.00" fill="#0c0c0c"/><rect x="2250.20" y="879.60" width="50.00" height="50.00" fill="#0c0c0c"/><rect x="2250.20" y="931.60" width="50.00" height="43.75" fill="#0c0c0c"/><rect x="2210.70" y="827.60" width="37.50" height="6.25" fill="#e6e6e6"/><rect x="2250.20" y="827.60" width="37.50" height="6.25" fill="#e6e6e6"/><rect x="2204.45" y="833.85" width="43.75" height="43.75" fill="#c9c9c9"/><rect x="2204.45" y="879.60" width="43.75" height="50.00" fill="#c9c9c9"/><rect x="2204.45" y="931.60" width="43.75" height="12.50" fill="#c9c9c9"/><rect x="2250.20" y="833.85" width="43.75" height="43.75" fill="#c9c9c9"/><rect x="2250.20" y="879.60" width="43.75" height="50.00" fill="#c9c9c9"/><rect x="2250.20" y="931.60" width="43.75" height="12.50" fill="#c9c9c9"/><rect x="2210.70" y="833.85" width="37.50" height="12.50" fill="#e6e6e6"/><rect x="2250.20" y="833.85" width="37.50" height="12.50" fill="#e6e6e6"/><rect x="2210.70" y="852.60" width="37.50" height="25.00" fill="#d7d7d7"/><rect x="2210.70" y="879.60" width="37.50" height="50.00" fill="#d7d7d7"/><rect x="2210.70" y="931.60" width="37.50" height="6.25" fill="#d7d7d7"/><rect x="2250.20" y="852.60" width="37.50" height="25.00" fill="#d7d7d7"/><rect x="2250.20" y="879.60" width="37.50" height="50.00" fill="#d7d7d7"/><rect x="2250.20" y="931.60" width="37.50" height="6.25" fill="#d7d7d7"/><rect x="2204.45" y="950.35" width="43.75" height="6.25" fill="#9a9a9a"/><rect x="2250.20" y="950.35" width="43.75" height="6.25" fill="#9a9a9a"/><rect x="2204.45" y="962.85" width="43.75" height="6.25" fill="#6e6e6e"/><rect x="2250.20" y="962.85" width="43.75" height="6.25" fill="#6e6e6e"/><rect x="2204.45" y="969.10" width="6.25" height="6.25" fill="#6e6e6e"/><rect x="2287.70" y="969.10" width="6.25" height="6.25" fill="#6e6e6e"/><rect x="2198.20" y="975.35" width="18.75" height="8.25" fill="#0c0c0c"/><rect x="2281.45" y="975.35" width="18.75" height="8.25" fill="#0c0c0c"/></svg>
<div class="abs" style="left:2196.6px;top:1531.5px;width:627.0px;height:54.6px;background:linear-gradient(#f0f0f0,#e4e4e4 40%,#cdcdcd);"></div>
<div class="abs" style="left:2196.6px;top:1585.3px;width:627.0px;height:2.1px;background:#ababab;"></div>
<svg class="abs" style="left:0;top:0" width="3024" height="1602" viewBox="0 0 3024 1602"><g transform="translate(2210.3 1544.5) scale(0.76)"><rect x="1.5" y="1.5" width="35" height="40" rx="2" fill="#000" opacity=".12"/><rect x=".8" y=".8" width="34" height="39" rx="2" fill="url(#pg)" stroke="#a6a8a3" stroke-width="1.5"/><rect x="2.4" y="2.4" width="30.8" height="35.8" rx="1" fill="none" stroke="#fff" stroke-width="1.4" opacity=".85"/><circle cx="26" cy="13.4" r="14" fill="url(#glow)"/><path d="M26.0 4.2L29.1 9.2L34.7 10.6L30.9 15.0L31.4 20.8L26.0 18.6L20.6 20.8L21.1 15.0L17.3 10.6L22.9 9.2Z" fill="#fffdf0" stroke="#fffdf0" stroke-width="2.6" stroke-linejoin="round"/></g><g opacity="0.6"><path d="M2273 1546H2288L2295 1553V1575H2273Z" fill="#f3f5f5" stroke="#a9b1b1" stroke-width="1.3" stroke-linejoin="round"/><path d="M2288 1546V1553H2295" fill="none" stroke="#a9b1b1" stroke-width="1.1"/></g><path d="M2268 1561.5H2278V1557L2285 1563L2278 1569V1564.8H2268Z" fill="#e3e7e7" stroke="#b7bfbf" stroke-width="1" opacity=".8"/><g opacity="1"><path d="M2333 1546H2348L2355 1553V1575H2333Z" fill="#f3f5f5" stroke="#a9b1b1" stroke-width="1.3" stroke-linejoin="round"/><path d="M2348 1546V1553H2355" fill="none" stroke="#a9b1b1" stroke-width="1.1"/></g><path d="M2343 1561.5H2352V1557L2359.5 1563L2352 1569V1564.8H2343Z" fill="#eef1f1" stroke="#8d9696" stroke-width="1.1"/><g opacity="0.8"><path d="M2391 1546H2406L2413 1553V1575H2391Z" fill="#f3f5f5" stroke="#a9b1b1" stroke-width="1.3" stroke-linejoin="round"/><path d="M2406 1546V1553H2413" fill="none" stroke="#a9b1b1" stroke-width="1.1"/></g><circle cx="2404" cy="1560" r="5.2" fill="none" stroke="#9b9b9b" stroke-width="2.6"/><path d="M2407 1564.5L2418 1575" stroke="#ababab" stroke-width="4" stroke-linecap="round"/><path d="M2400 1556L2404 1560" stroke="#f3f5f5" stroke-width="3.2"/><rect x="2454.5" y="1546.5" width="19.5" height="26.5" fill="#f1f1f1" stroke="#b0b0b0" stroke-width="1.2"/><path d="M2452.3 1562Q2449.5 1551.5 2460 1550.5V1546.5L2469.5 1553.5L2460 1560V1556Q2455.5 1556.5 2457 1562Z" fill="#e27a17" stroke="#a85407" stroke-width="1.1" stroke-linejoin="round"/><path d="M2476.3 1557.5Q2479.5 1568.5 2468.5 1569.5V1573.5L2459 1566.5L2468.5 1560V1564Q2473 1563.5 2471.5 1557.5Z" fill="#2fc46a" stroke="#14853f" stroke-width="1.1" stroke-linejoin="round"/><g transform="translate(2509.6 1544.2) scale(1.0)"><ellipse cx="14.4" cy="30.6" rx="10.5" ry="2.2" fill="#000" opacity=".25"/><path d="M3.4 10.5L5.2 28.2Q14.4 32.8 23.6 28.2L25.4 10.5Z" fill="url(#trb)" stroke="#3f413d" stroke-width="1.5"/><path d="M7.2 15L8.4 28.6M10.8 15.6L11.5 29.8M14.4 15.8V30.2M18 15.6L17.3 29.8M21.6 15L20.4 28.6" stroke="#4b4d49" stroke-width="1.5" opacity=".7"/><path d="M.9 8.2Q.9 1 14.4 1T27.9 8.2Q27.9 15.2 14.4 15.2T.9 8.2Z" fill="url(#trr)" stroke="#4a4c48" stroke-width="1.4"/><ellipse cx="14.4" cy="5.6" rx="4.6" ry="2.3" fill="#1c1c1c"/><ellipse cx="14.4" cy="5.9" rx="7.4" ry="3.6" fill="none" stroke="#8f908c" stroke-width=".9"/></g><path d="M2789.5 1563.7H2803A5.9 5.9 0 0 0 2807.2 1553.6Q2805.3 1551.9 2802.6 1551.8" fill="none" stroke="#5f5f5f" stroke-width="3.4"/><path d="M2782.4 1563.7L2790.6 1557.8V1569.6Z" fill="#5f5f5f"/></svg>
<div class="abs" style="left:2828.0px;top:1540.6px;width:185.5px;height:41.0px;background:#fff;border-radius:11px;box-shadow:0 .5px 2px rgba(0,0,0,.35),0 0 0 .5px rgba(0,0,0,.08);"></div>
<div class="abs" style="left:2978.0px;top:1545.4px;width:32.0px;height:32.0px;background:linear-gradient(#2a8cff,#0772f5);border-radius:8.5px;"></div>
<svg class="abs" style="left:2978px;top:1545.4px" width="32" height="32" viewBox="0 0 32 32"><path d="M10 13.5L16 19.5L22 13.5" fill="none" stroke="#fff" stroke-width="3.2" stroke-linecap="round" stroke-linejoin="round"/></svg>
<div class="abs" style="left:0.0px;top:1594.0px;width:499.0px;height:1.4px;background:#c9c9c9;"></div>
<div class="abs" style="left:0.0px;top:1595.4px;width:499.0px;height:0.7px;background:#f4f4f4;"></div>
<div class="abs" style="left:502.0px;top:1594.3px;width:470.0px;height:1.8px;background:#adadad;"></div>
<div class="abs" style="left:0.0px;top:1596.0px;width:972.0px;height:1.1px;background:#6f6f6f;"></div>
<div class="abs" style="left:2194.2px;top:1595.7px;width:830.0px;height:1.1px;background:#6f6f6f;"></div>
<div class="abs" style="left:0.0px;top:1597.1px;width:3024.0px;height:5.0px;background:#ececec;"></div>
<div class="abs" style="left:972.0px;top:1596.0px;width:1222.2px;height:1.2px;background:#ececec;"></div>
</div>
</body></html>
